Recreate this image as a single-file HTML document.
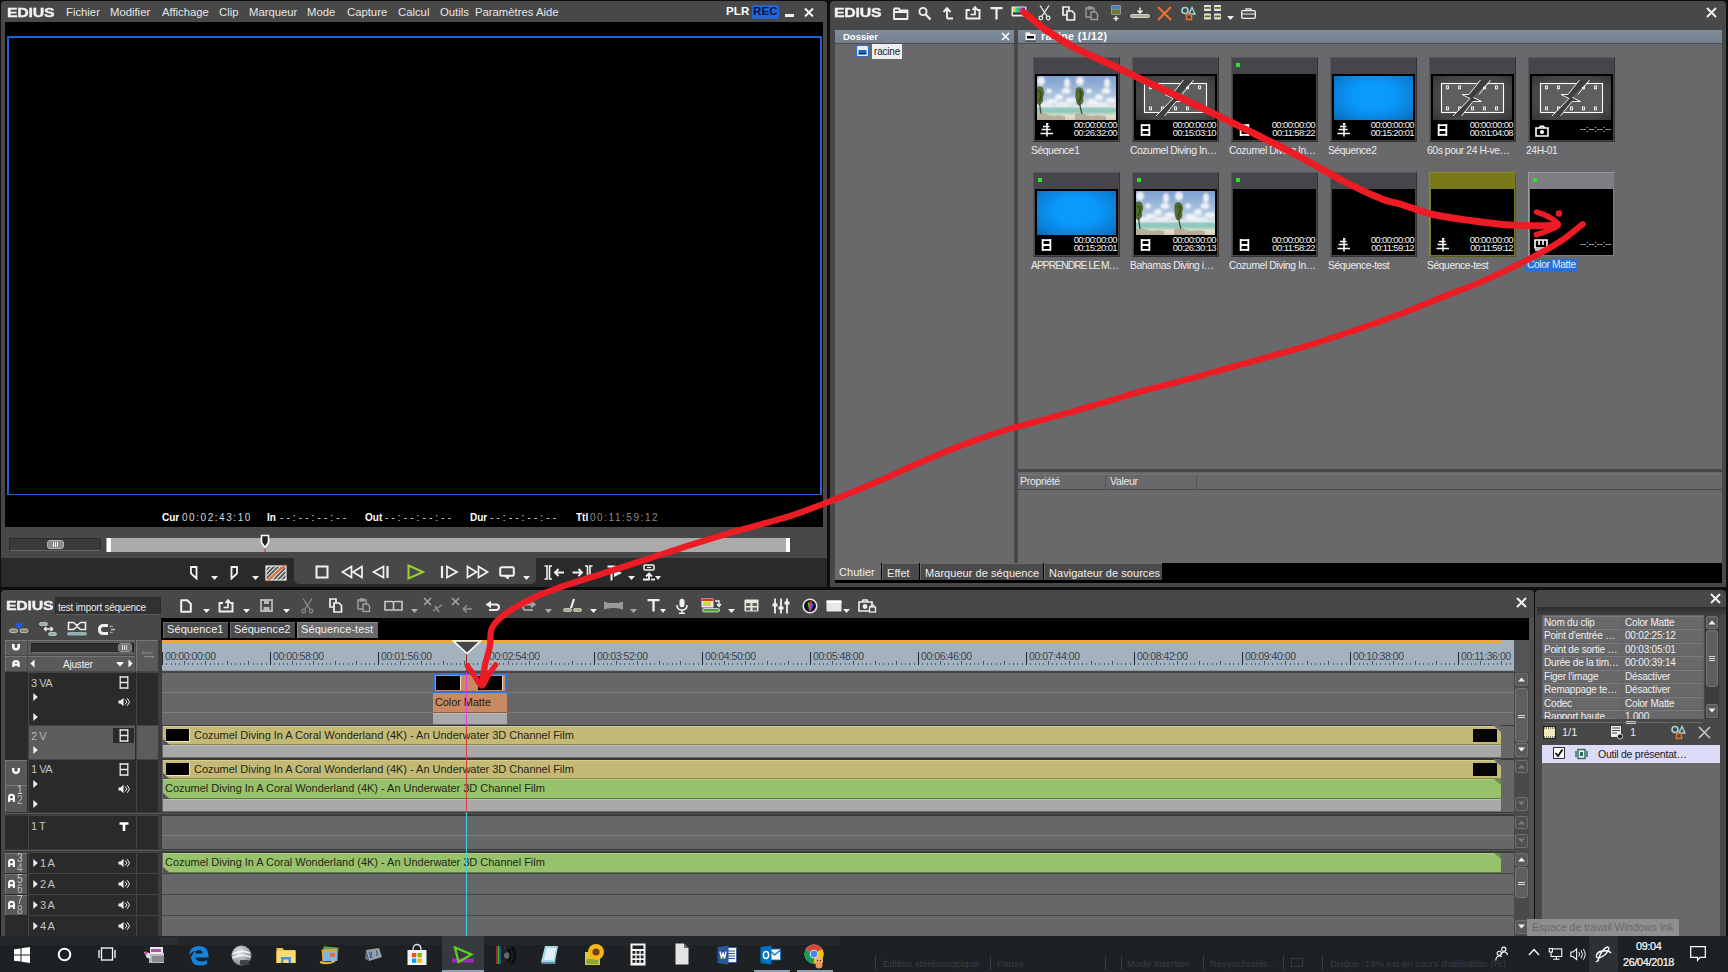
<!DOCTYPE html>
<html lang="fr">
<head>
<meta charset="utf-8">
<title>EDIUS</title>
<style>
*{box-sizing:border-box;margin:0;padding:0}
html,body{width:1728px;height:972px;overflow:hidden;background:#0e0e0e}
body{position:relative;font-family:"Liberation Sans",sans-serif;font-size:11px;color:#e8e8e8;line-height:1}
.a{position:absolute}
.t{position:absolute;white-space:nowrap}
svg{position:absolute;overflow:visible}
.logo{position:absolute;font-weight:bold;font-size:13px;color:#f2f2f2;letter-spacing:-0.2px;-webkit-text-stroke:0.35px #f2f2f2;transform-origin:0 0;transform:scaleX(1.22)}
.win{position:absolute;background:#484848;border-radius:4px 4px 0 0}
/* player */
#pl .menu span{position:absolute;top:5.5px;font-size:11.3px;color:#e6e6e6}
.tc{position:absolute;top:512px;font-size:10px;color:#d8d8d8;letter-spacing:1.55px}
.tcl{position:absolute;top:512px;font-size:10px;font-weight:bold;color:#fff}
/* bin */
.hdr{position:absolute;height:14px;border-bottom:1px solid #4c4c4e;background:linear-gradient(#808d9b,#74808d);font-size:10px;font-weight:bold;color:#fff}
.panel{position:absolute;background:#69696b}
.th{position:absolute;width:84px;height:84px;background:#3f3f41;box-shadow:0 0 0 1px #5a5a5c}
.th .im{position:absolute;left:5px;top:17px;width:78px;height:44px}
.th .bk{position:absolute;left:5px;top:17px;width:78px;height:64px;background:#000}
.th .tm{position:absolute;right:3px;top:62px;font-size:9px;line-height:8px;color:#eee;text-align:right;letter-spacing:-0.2px}
.th .gd{position:absolute;left:5px;top:7px;width:4px;height:4px;background:#2de02d}
.cap{position:absolute;font-size:10.3px;color:#ececec;white-space:nowrap;letter-spacing:-0.4px}
.tab{position:absolute;white-space:nowrap;font-size:11px;color:#eee;padding:4px 0 0 4px;background:#4a4a4c;border-left:1px solid #6c6c6e;border-top:1px solid #6c6c6e;letter-spacing:0.05px}
/* timeline */
.trk{position:absolute;left:162px;width:1352px;background:#69696b}
.clipv{position:absolute;background:#c4ba76;color:#222;font-size:11px}
.clipa{position:absolute;background:#97c26c;color:#222;font-size:11px}
.clipg{position:absolute;background:#a8a8a8}
.hd{position:absolute;background:#2a2a2a}
.rl{position:absolute;top:651px;font-size:10px;color:#3a4048;letter-spacing:-0.2px}
.rt{position:absolute;top:650px;width:1px;height:13px;background:#2a3038}
.inf{position:absolute;font-size:10px;color:#f0f0f0;white-space:nowrap;letter-spacing:-0.2px}
</style>
</head>
<body>

<!-- ================= PLAYER WINDOW ================= -->
<div id="pl" class="win" style="left:1px;top:1px;width:826px;height:586px">
  <div class="logo" style="left:6px;top:5px">EDIUS</div>
  <div class="menu">
    <span style="left:65px">Fichier</span>
    <span style="left:109px">Modifier</span>
    <span style="left:161px">Affichage</span>
    <span style="left:218px">Clip</span>
    <span style="left:248px">Marqueur</span>
    <span style="left:306px">Mode</span>
    <span style="left:346px">Capture</span>
    <span style="left:397px">Calcul</span>
    <span style="left:439px">Outils</span>
    <span style="left:474px">Paramètres</span>
    <span style="left:535px">Aide</span>
  </div>
  <div class="t" style="left:725px;top:5px;font-size:11.5px;font-weight:bold;color:#fff;letter-spacing:0.2px">PLR</div>
  <div class="t" style="left:751px;top:4px;width:27px;height:14px;background:#2565d8;border-radius:2px;font-size:11.5px;font-weight:bold;color:#0a1a44;padding:1px 0 0 1px;letter-spacing:0.1px">REC</div>
  <div class="a" style="left:784px;top:13px;width:9px;height:3px;background:#f0f0f0"></div>
  <svg style="left:803px;top:7px" width="10" height="9"><path d="M1 0.500L9 8.500M9 0.500L1 8.500" stroke="#f0f0f0" stroke-width="2"/></svg>

  <div class="a" style="left:4px;top:21px;width:818px;height:505px;background:#000"></div>
  <div class="a" style="left:6px;top:35px;width:815px;height:459px;border:2px solid #1f62d6;border-width:2px 2px 1px 2px"></div>

  <div class="tcl" style="left:161px">Cur</div><div class="tc" style="left:181px">00:02:43:10</div>
  <div class="tcl" style="left:266px">In</div><div class="tc" style="left:279px;letter-spacing:3.1px">--:--:--:--</div>
  <div class="tcl" style="left:364px">Out</div><div class="tc" style="left:384px;letter-spacing:3.1px">--:--:--:--</div>
  <div class="tcl" style="left:469px">Dur</div><div class="tc" style="left:489px;letter-spacing:3.1px">--:--:--:--</div>
  <div class="tcl" style="left:575px">Ttl</div><div class="tc" style="left:589px;color:#8a8a8a">00:11:59:12</div>

  <!-- slider + scrub -->
  <div class="a" style="left:8px;top:537px;width:92px;height:13px;background:#3a3a3a;border:1px solid #2c2c2c;border-bottom-color:#666"></div>
  <div class="a" style="left:46px;top:539px;width:17px;height:9px;background:#8a8a8a;border-radius:3px;border:1px solid #b4b4b4"></div><div class="a" style="left:52px;top:541px;width:1px;height:5px;background:#eee"></div><div class="a" style="left:54px;top:541px;width:1px;height:5px;background:#eee"></div><div class="a" style="left:56px;top:541px;width:1px;height:5px;background:#eee"></div>
  <div class="a" style="left:105px;top:537px;width:683px;height:14px;background:#ababab"></div>
  <div class="a" style="left:106px;top:537px;width:4px;height:14px;background:#fff"></div>
  <div class="a" style="left:785px;top:537px;width:4px;height:14px;background:#fff"></div>
  <svg style="left:259px;top:533px" width="10" height="18"><path d="M1.5 1.5h7v7l-3.5 5l-3.5-5z" fill="#222" stroke="#fff" stroke-width="1.6"/><path d="M5 14v4" stroke="#e03030" stroke-width="1"/></svg>

  <!-- controls row -->
  <div class="a" style="left:0;top:557px;width:826px;height:29px;background:#2a2a2a"></div>
  <div class="a" style="left:293px;top:557px;width:242px;height:26px;background:#484848;border-radius:0 0 5px 5px"></div>
  <svg style="left:189px;top:565px" width="8" height="14" viewBox="0 0 8 14"><path d="M1 1h5.500v11.500L1 7.500z" stroke="#f2f2f2" fill="none" stroke-width="1.800"/></svg>
  <svg style="left:210px;top:575px" width="7" height="4" viewBox="0 0 7 4"><path d="M0 0h7L3.500 4z" fill="#f0f0f0"/></svg>
  <svg style="left:229px;top:565px" width="8" height="14" viewBox="0 0 8 14"><path d="M7 1H1.500v11.500L7 7.500z" stroke="#f2f2f2" fill="none" stroke-width="1.800"/></svg>
  <svg style="left:251px;top:575px" width="7" height="4" viewBox="0 0 7 4"><path d="M0 0h7L3.500 4z" fill="#f0f0f0"/></svg>
  <svg style="left:264px;top:563px" width="22" height="18" viewBox="0 0 22 18"><defs><pattern id="hat" width="3" height="3" patternUnits="userSpaceOnUse" patternTransform="rotate(-45)"><rect width="3" height="1.400" fill="#f0f0f0"/></pattern></defs><rect x="1" y="2" width="20" height="14" fill="#3a3a3a"/><rect x="1" y="2" width="20" height="14" fill="url(#hat)"/><rect x="1" y="2" width="20" height="14" fill="none" stroke="#f0f0f0" stroke-width="1.200"/><path d="M2 17L20.500 1" stroke="#f07030" stroke-width="1.800"/></svg>
  <svg style="left:314px;top:564px" width="14" height="14" viewBox="0 0 14 14"><rect x="1.500" y="1.500" width="11" height="11" stroke="#f2f2f2" fill="none" stroke-width="2"/></svg>
  <svg style="left:340px;top:564px" width="23" height="14" viewBox="0 0 23 14"><path d="M10.500 1.500L1.500 7l9 5.500zM21 1.500L12 7l9 5.500z" stroke="#f2f2f2" fill="none" stroke-width="1.700" stroke-linejoin="miter"/></svg>
  <svg style="left:371px;top:564px" width="18" height="14" viewBox="0 0 18 14"><path d="M11.500 1.500L1.500 7l10 5.500z" stroke="#f2f2f2" fill="none" stroke-width="1.700"/><path d="M15.500 1v12" stroke="#f2f2f2" fill="none" stroke-width="2.200"/></svg>
  <svg style="left:406px;top:563px" width="18" height="16" viewBox="0 0 18 16"><path d="M1.500 1.500L16 8L1.500 14.500z" fill="none" stroke="#9ad030" stroke-width="2"/></svg>
  <svg style="left:439px;top:564px" width="19" height="14" viewBox="0 0 19 14"><path d="M7 1.500L17 7l-10 5.500z" stroke="#f2f2f2" fill="none" stroke-width="1.700"/><path d="M2 1v12" stroke="#f2f2f2" fill="none" stroke-width="2.200"/></svg>
  <svg style="left:465px;top:564px" width="24" height="14" viewBox="0 0 24 14"><path d="M1.500 1.500L10.500 7l-9 5.500zM12.500 1.500L21.500 7l-9 5.500z" stroke="#f2f2f2" fill="none" stroke-width="1.700"/></svg>
  <svg style="left:498px;top:565px" width="16" height="14" viewBox="0 0 16 14"><rect x="1.200" y="1.200" width="13.600" height="8.600" rx="1.500" stroke="#f2f2f2" fill="none" stroke-width="2"/><path d="M5 9.500L9 13l1-3.500" fill="#f2f2f2" stroke="#f2f2f2" stroke-width="1"/></svg>
  <svg style="left:522px;top:575px" width="7" height="4" viewBox="0 0 7 4"><path d="M0 0h7L3.500 4z" fill="#f0f0f0"/></svg>
  <svg style="left:543px;top:564px" width="21" height="15" viewBox="0 0 21 15"><path d="M0.500 1h2.500v13h-2.500M8 1H5.500v13H8" stroke="#f2f2f2" fill="none" stroke-width="1.600"/><path d="M20 7.500h-9M14.500 4L11 7.500l3.500 3.500" stroke="#f2f2f2" fill="none" stroke-width="1.900"/></svg>
  <svg style="left:571px;top:564px" width="21" height="15" viewBox="0 0 21 15"><path d="M13 1h2.500v13H13M20.500 1H18v13h2.500" stroke="#f2f2f2" fill="none" stroke-width="1.600"/><path d="M0.500 7.500h9M6.500 4L10 7.500L6.500 11" stroke="#f2f2f2" fill="none" stroke-width="1.900"/></svg>
  <svg style="left:606px;top:564px" width="16" height="16" viewBox="0 0 16 16"><path d="M0.500 1.500h8M4.500 1.500v14" stroke="#f2f2f2" fill="none" stroke-width="2"/><path d="M7 4l8 4l-8 4z" fill="#f2f2f2"/></svg>
  <svg style="left:627px;top:575px" width="7" height="4" viewBox="0 0 7 4"><path d="M0 0h7L3.500 4z" fill="#f0f0f0"/></svg>
  <svg style="left:641px;top:563px" width="14" height="17" viewBox="0 0 14 17"><rect x="2" y="1" width="10" height="5" rx="1" stroke="#f2f2f2" fill="none" stroke-width="1.500"/><path d="M5 3.500h4" stroke="#f2f2f2" fill="none" stroke-width="1.200"/><path d="M1 15.500h6V11M4 12.500L7 9.500l3 3" stroke="#f2f2f2" fill="none" stroke-width="1.800"/><path d="M9 15.500h4" stroke="#f2f2f2" fill="none" stroke-width="1.800"/></svg>
  <svg style="left:654px;top:575px" width="6" height="4" viewBox="0 0 6 4"><path d="M0 0h6L3 4z" fill="#f0f0f0"/></svg>
</div>

<!-- ================= BIN WINDOW ================= -->
<svg width="0" height="0" style="left:0;top:0"><defs>
<symbol id="i-seq" viewBox="0 0 14 14"><path d="M6 0.8h2.4M3 3.4h6.5M1.6 6.4h9M0.5 10.6h12.5M7 0v13.5" stroke="#fff" stroke-width="1.5" fill="none"/></symbol>
<symbol id="i-film" viewBox="0 0 12 14"><path d="M1.8 0.5v13M10.2 0.5v13M1.8 1.6h8.4M1.8 7h8.4M1.8 12.4h8.4" stroke="#fff" stroke-width="2" fill="none"/></symbol>
<symbol id="i-cam" viewBox="0 0 14 12"><path d="M1 3h12v8H1zM4.5 3l1-1.8h3l1 1.8" stroke="#fff" stroke-width="1.6" fill="none"/><circle cx="7" cy="7" r="2" fill="#fff"/></symbol>
<symbol id="i-mat" viewBox="0 0 14 12"><path d="M1 1h12v8H1zM5 1v5M9 1v5M1 11h9" stroke="#fff" stroke-width="1.6" fill="none"/></symbol>
<symbol id="beach" viewBox="0 0 79 44">
<defs><linearGradient id="sky" x1="0" y1="0" x2="0" y2="1"><stop offset="0" stop-color="#7c9fcf"/><stop offset="0.45" stop-color="#abc3de"/><stop offset="0.7" stop-color="#dde6ea"/><stop offset="0.73" stop-color="#9accc0"/><stop offset="0.8" stop-color="#8cc6b8"/><stop offset="0.86" stop-color="#b5d6c6"/><stop offset="0.9" stop-color="#e6dfd0"/><stop offset="1" stop-color="#d9ccb8"/></linearGradient>
<filter id="bl" x="-20%" y="-20%" width="140%" height="140%"><feGaussianBlur stdDeviation="0.9"/></filter><filter id="bl2" x="-20%" y="-20%" width="140%" height="140%"><feGaussianBlur stdDeviation="0.5"/></filter>
<clipPath id="bc"><rect width="79" height="44"/></clipPath></defs>
<g clip-path="url(#bc)"><rect width="79" height="44" fill="url(#sky)"/>
<g fill="#f6f7f9" filter="url(#bl)" opacity="0.92"><ellipse cx="4" cy="5" rx="4" ry="4.500"/><ellipse cx="12" cy="15" rx="3" ry="2.500"/><ellipse cx="30" cy="7" rx="3" ry="5"/><ellipse cx="29" cy="15" rx="4.500" ry="3"/><ellipse cx="22" cy="21" rx="4" ry="3"/><ellipse cx="34" cy="24" rx="5" ry="2.500"/><ellipse cx="15" cy="25" rx="5" ry="2"/><ellipse cx="43" cy="5" rx="4" ry="4.500"/><ellipse cx="52" cy="15" rx="3" ry="2.500"/><ellipse cx="70" cy="7" rx="3" ry="5"/><ellipse cx="69" cy="15" rx="4.500" ry="3"/><ellipse cx="62" cy="21" rx="4" ry="3"/><ellipse cx="74" cy="24" rx="5" ry="2.500"/><ellipse cx="55" cy="25" rx="5" ry="2"/><ellipse cx="8" cy="28" rx="7" ry="1.500"/><ellipse cx="60" cy="28" rx="12" ry="1.500"/><ellipse cx="26" cy="28" rx="8" ry="1.500"/></g>
<g filter="url(#bl2)"><path d="M0 11q5-2 6.500 2.500q1.500 4-0.500 7.500q1 5-2.500 7.500q-2.500 1-3.500-1z" fill="#526b30"/><path d="M1 15q3 0 3 4t-2 6" stroke="#2f4a1c" stroke-width="1.500" fill="none"/><path d="M39 12.500q4.500-3 7 1q2 4.500 0 8q1.500 5-2.500 7.500q-3.500 1-4-3q-2-7-0.500-13.500z" fill="#526b30"/><path d="M42 15q3 1 2 5t-2 6" stroke="#2f4a1c" stroke-width="1.500" fill="none"/>
<path d="M2.500 27l1.500 11M42.500 27q1 6 2.500 11" stroke="#4e4030" stroke-width="1.300" fill="none"/>
<path d="M0 38q5-1.500 10 0.500t12 0.500l6 1v4H0zM38 38q6-1.500 11 0.500t12 0.500l8 1v4H38z" fill="#9a8d78" opacity="0.550"/></g>
</g></symbol>
<symbol id="offl" viewBox="0 0 79 44">
<defs><radialGradient id="og" cx="0.5" cy="0.5" r="0.75"><stop offset="0" stop-color="#585858"/><stop offset="0.7" stop-color="#444"/><stop offset="1" stop-color="#303030"/></radialGradient></defs>
<rect width="79" height="44" fill="url(#og)"/>
<rect x="8.500" y="7.500" width="62" height="29" fill="#5e5e5e" stroke="#fff" stroke-width="1.100"/>
<g fill="none" stroke="#fff" stroke-width="0.900"><rect x="13.500" y="10" width="2" height="2.800"/><rect x="25.500" y="10" width="2" height="2.800"/><rect x="50.500" y="10" width="2" height="2.800"/><rect x="62.500" y="10" width="2" height="2.800"/><rect x="13.500" y="31" width="2" height="2.800"/><rect x="25.500" y="31" width="2" height="2.800"/><rect x="38.500" y="31" width="2" height="2.800"/><rect x="50.500" y="31" width="2" height="2.800"/><rect x="62.500" y="31" width="2" height="2.800"/></g>
<path d="M47.500 4L36 18.500h-7L37 22.500L20 40h8.500L40 25.500h7L39.500 21.500L57.500 4z" fill="#3e3e3e"/>
<path d="M47.500 4L36 18.500h-7l8 4L20 40M57.500 4L46 18.500M28.500 40L40 25.500h8.500l-8-4" stroke="#fff" stroke-width="0.900" fill="none"/>
<path d="M57.500 4L43 22.500M47.500 4L33 22.500" stroke="#fff" stroke-width="0" fill="none"/>
</symbol>
</defs></svg>
<div class="win" style="left:830px;top:1px;width:896px;height:586px">
<div class="logo" style="left:4px;top:5px">EDIUS</div>
<svg style="left:63px;top:6px" width="16" height="13" viewBox="0 0 16 13"><path d="M1 3.5V12h13.5V3.5H7L6 1.5H1.5z M1 5h13.5" stroke="#f0f0f0" fill="none" stroke-width="1.8" stroke-linejoin="round"/></svg>
<svg style="left:88px;top:5px" width="14" height="15" viewBox="0 0 14 15"><circle cx="5" cy="5.5" r="3.6" stroke="#f0f0f0" fill="none" stroke-width="1.9"/><path d="M7.8 8.5L12.5 13.5" stroke="#f0f0f0" fill="none" stroke-width="2.2"/></svg>
<svg style="left:112px;top:5px" width="12" height="14" viewBox="0 0 12 14"><path d="M5 12.5h6M5 12.5V3M1.5 6L5 2.2L8.5 6" stroke="#f0f0f0" fill="none" stroke-width="1.9"/></svg>
<svg style="left:135px;top:4px" width="16" height="15" viewBox="0 0 16 15"><path d="M5 5H1.5v8.5h13V5H12" stroke="#f0f0f0" fill="none" stroke-width="1.9"/><path d="M5.5 9.5h4.5V3M7.5 5L10 2L12.5 5" stroke="#f0f0f0" fill="none" stroke-width="1.7"/></svg>
<svg style="left:160px;top:6px" width="13" height="13" viewBox="0 0 13 13"><path d="M0.5 1.2h12M6.5 1.2V12.5" stroke="#f0f0f0" fill="none" stroke-width="2.2"/></svg>
<svg style="left:181px;top:5px" width="16" height="12" viewBox="0 0 16 12"><rect x="0.5" y="0.5" width="15" height="10" rx="1" fill="#e8e8e8"/><rect x="2" y="1.5" width="2.4" height="5" fill="#d8d820"/><rect x="4.4" y="1.5" width="2.4" height="5" fill="#20c8c8"/><rect x="6.8" y="1.5" width="2.4" height="5" fill="#20c820"/><rect x="9.2" y="1.5" width="2.4" height="5" fill="#c820c8"/><rect x="11.6" y="1.5" width="2.4" height="5" fill="#2020c8"/><rect x="2" y="6.5" width="12" height="2" fill="#223"/></svg>
<svg style="left:208px;top:4px" width="13" height="16" viewBox="0 0 13 16"><path d="M2 0.5L9 11M11 0.5L4 11" stroke="#f0f0f0" fill="none" stroke-width="1.3"/><circle cx="2.8" cy="13" r="1.8" stroke="#f0f0f0" fill="none" stroke-width="1.2"/><circle cx="10.2" cy="13" r="1.8" stroke="#f0f0f0" fill="none" stroke-width="1.2"/></svg>
<svg style="left:232px;top:5px" width="14" height="15" viewBox="0 0 14 15"><path d="M1 1h6v8H1z" stroke="#f0f0f0" fill="none" stroke-width="1.7"/><path d="M5 5h5l2.5 2.5V14H5z" fill="#484848" stroke="#f0f0f0" stroke-width="1.7"/></svg>
<svg style="left:255px;top:5px" width="14" height="15" viewBox="0 0 14 15"><path d="M1 2h8v9H1zM3.5 1h3v2h-3z" fill="none" stroke="#9a9a9a" stroke-width="1.4"/><path d="M6 6h4.5l2 2V13.5H6z" fill="#484848" stroke="#9a9a9a" stroke-width="1.4"/></svg>
<svg style="left:281px;top:4px" width="10" height="16" viewBox="0 0 10 16"><rect x="0.5" y="0.5" width="9" height="9" fill="#ddd"/><rect x="1" y="1" width="8" height="3.5" fill="#4a7fd0"/><rect x="1" y="4.5" width="8" height="4.5" fill="#6a7a2a"/><path d="M5 16V11M2.5 13.5h5" stroke="#f0f0f0" stroke-width="1.4"/></svg>
<svg style="left:300px;top:6px" width="20" height="12" viewBox="0 0 20 12"><path d="M10 0.5V5M7.5 3.5L10 6l2.5-2.5" stroke="#f0f0f0" stroke-width="1.4" fill="none"/><rect x="0.5" y="7.5" width="19" height="3" rx="1.5" fill="#9fb48a" stroke="#e8e8e8" stroke-width="0.8"/></svg>
<svg style="left:327px;top:5px" width="15" height="15" viewBox="0 0 15 15"><path d="M1 1L14 14M14 1L1 14" stroke="#f07030" stroke-width="2"/></svg>
<svg style="left:351px;top:5px" width="15" height="15" viewBox="0 0 15 15"><circle cx="4" cy="4.5" r="3" fill="none" stroke="#9fd6d6" stroke-width="1.6"/><path d="M11 1.5L14 8H8z" fill="none" stroke="#9fd6d6" stroke-width="1.4"/><rect x="5.5" y="8.5" width="5" height="5" fill="none" stroke="#f07030" stroke-width="1.5"/></svg>
<svg style="left:374px;top:4px" width="18" height="15" viewBox="0 0 18 15"><g fill="#e4e4e4"><rect x="0" y="0" width="7" height="6" rx="1"/><rect x="10" y="0" width="7" height="6" rx="1"/><rect x="0" y="8.5" width="7" height="6" rx="1"/><rect x="10" y="8.5" width="7" height="6" rx="1"/></g><g fill="#6a6a20"><rect x="0.5" y="2" width="6" height="1.8"/><rect x="10.5" y="2" width="6" height="1.8"/><rect x="0.5" y="10.5" width="6" height="1.8"/><rect x="10.5" y="10.5" width="6" height="1.8"/></g></svg>
<svg style="left:397px;top:15px" width="7" height="4" viewBox="0 0 7 4"><path d="M0 0h7L3.5 4z" fill="#f0f0f0"/></svg>
<svg style="left:411px;top:7px" width="15" height="11" viewBox="0 0 15 11"><rect x="0.7" y="2.7" width="13.6" height="7.6" rx="1" stroke="#f0f0f0" fill="none" stroke-width="1.3"/><path d="M5 2.5V0.8h5V2.5M0.7 6h13.6" stroke="#f0f0f0" fill="none" stroke-width="1.2"/></svg>
<svg style="left:876px;top:6px" width="11" height="11" viewBox="0 0 11 11"><path d="M1 1L10 10M10 1L1 10" stroke="#f0f0f0" stroke-width="2"/></svg>
<div class="panel" style="left:5px;top:29px;width:179px;height:533px"></div>
<div class="hdr" style="left:5px;top:29px;width:179px"><span class="t" style="left:8px;top:2px;font-size:9.5px">Dossier</span></div>
<svg style="left:171px;top:31px" width="9" height="9" viewBox="0 0 9 9"><path d="M1 1L8 8M8 1L1 8" stroke="#fff" stroke-width="1.6"/></svg>
<svg style="left:26px;top:44px" width="13" height="12" viewBox="0 0 13 12"><rect x="0.5" y="0.5" width="12" height="11" rx="1.5" fill="#e8eef6" stroke="#2a6ad0" stroke-width="1"/><rect x="2.5" y="5" width="8" height="3.5" fill="#1565c8"/><rect x="2.5" y="8" width="8" height="1.5" fill="#0a2a60"/></svg>
<div class="t" style="left:42px;top:43px;width:30px;height:15px;background:#efefef;color:#222;font-size:10px;padding:3px 0 0 2px;letter-spacing:-0.2px">racine</div>
<div class="panel" style="left:188px;top:29px;width:704px;height:439px"></div>
<div class="hdr" style="left:188px;top:29px;width:704px"><span class="t" style="left:23px;top:1px;font-size:10.5px;letter-spacing:0.4px">racine (1/12)</span></div>
<svg style="left:195px;top:31px" width="11" height="10" viewBox="0 0 11 10"><path d="M0.500 1V8.500h10V2H5.500L4.800 0.500H0.500z" fill="#fff"/><rect x="2" y="4" width="7" height="2.500" fill="#000"/><rect x="0.500" y="8.500" width="10.500" height="1" fill="#222"/></svg>
<div class="a" style="left:203px;top:56px;width:87px;height:85px;background:#46464a;border:1px solid #57575b;border-right-color:#333336;border-bottom-color:#333336">
<div class="a" style="left:1px;top:16px;width:83px;height:66px;background:#000"></div>
<svg style="left:3px;top:18px" width="79" height="44"><use href="#beach"/></svg>
<svg style="left:6px;top:65px" width="14" height="14"><use href="#i-seq"/></svg>
<div class="t" style="right:2px;top:63px;font-size:9.5px;line-height:7.5px;color:#f4f4f4;text-align:right;letter-spacing:-0.62px">00:00:00:00<br>00:26:32:00</div>
</div>
<div class="cap" style="left:201px;top:145px">Séquence1</div>
<div class="a" style="left:302px;top:56px;width:87px;height:85px;background:#46464a;border:1px solid #57575b;border-right-color:#333336;border-bottom-color:#333336">
<div class="a" style="left:1px;top:16px;width:83px;height:66px;background:#000"></div>
<svg style="left:3px;top:18px" width="79" height="44"><use href="#offl"/></svg>
<svg style="left:6.5px;top:65px" width="11" height="14"><use href="#i-film"/></svg>
<div class="t" style="right:2px;top:63px;font-size:9.5px;line-height:7.5px;color:#f4f4f4;text-align:right;letter-spacing:-0.62px">00:00:00:00<br>00:15:03:10</div>
</div>
<div class="cap" style="left:300px;top:145px">Cozumel Diving In…</div>
<div class="a" style="left:401px;top:56px;width:87px;height:85px;background:#46464a;border:1px solid #57575b;border-right-color:#333336;border-bottom-color:#333336">
<div class="a" style="left:1px;top:16px;width:83px;height:66px;background:#000"></div>
<div class="a" style="left:4px;top:5px;width:4px;height:4px;background:#30e030"></div>
<svg style="left:6.5px;top:65px" width="11" height="14"><use href="#i-film"/></svg>
<div class="t" style="right:2px;top:63px;font-size:9.5px;line-height:7.5px;color:#f4f4f4;text-align:right;letter-spacing:-0.62px">00:00:00:00<br>00:11:58:22</div>
</div>
<div class="cap" style="left:399px;top:145px">Cozumel Diving In…</div>
<div class="a" style="left:500px;top:56px;width:87px;height:85px;background:#46464a;border:1px solid #57575b;border-right-color:#333336;border-bottom-color:#333336">
<div class="a" style="left:1px;top:16px;width:83px;height:66px;background:#000"></div>
<div class="a" style="left:3px;top:18px;width:79px;height:44px;background:radial-gradient(ellipse at 50% 45%,#0a9eff 0%,#0a98fb 40%,#0a7cd2 80%,#0a66b2 100%)"></div>
<svg style="left:6px;top:65px" width="14" height="14"><use href="#i-seq"/></svg>
<div class="t" style="right:2px;top:63px;font-size:9.5px;line-height:7.5px;color:#f4f4f4;text-align:right;letter-spacing:-0.62px">00:00:00:00<br>00:15:20:01</div>
</div>
<div class="cap" style="left:498px;top:145px">Séquence2</div>
<div class="a" style="left:599px;top:56px;width:87px;height:85px;background:#46464a;border:1px solid #57575b;border-right-color:#333336;border-bottom-color:#333336">
<div class="a" style="left:1px;top:16px;width:83px;height:66px;background:#000"></div>
<svg style="left:3px;top:18px" width="79" height="44"><use href="#offl"/></svg>
<svg style="left:6.5px;top:65px" width="11" height="14"><use href="#i-film"/></svg>
<div class="t" style="right:2px;top:63px;font-size:9.5px;line-height:7.5px;color:#f4f4f4;text-align:right;letter-spacing:-0.62px">00:00:00:00<br>00:01:04:08</div>
</div>
<div class="cap" style="left:597px;top:145px">60s pour 24 H-ve…</div>
<div class="a" style="left:698px;top:56px;width:87px;height:85px;background:#46464a;border:1px solid #57575b;border-right-color:#333336;border-bottom-color:#333336">
<div class="a" style="left:1px;top:16px;width:83px;height:66px;background:#000"></div>
<svg style="left:3px;top:18px" width="79" height="44"><use href="#offl"/></svg>
<svg style="left:6px;top:67px" width="14" height="12"><use href="#i-cam"/></svg>
<div class="t" style="right:3px;top:67px;font-size:9px;color:#e4e4e4;letter-spacing:-0.05px">--:--:--:--</div>
</div>
<div class="cap" style="left:696px;top:145px">24H-01</div>
<div class="a" style="left:203px;top:171px;width:87px;height:85px;background:#46464a;border:1px solid #57575b;border-right-color:#333336;border-bottom-color:#333336">
<div class="a" style="left:1px;top:16px;width:83px;height:66px;background:#000"></div>
<div class="a" style="left:3px;top:18px;width:79px;height:44px;background:radial-gradient(ellipse at 50% 45%,#0a9eff 0%,#0a98fb 40%,#0a7cd2 80%,#0a66b2 100%)"></div>
<div class="a" style="left:4px;top:5px;width:4px;height:4px;background:#30e030"></div>
<svg style="left:6.5px;top:65px" width="11" height="14"><use href="#i-film"/></svg>
<div class="t" style="right:2px;top:63px;font-size:9.5px;line-height:7.5px;color:#f4f4f4;text-align:right;letter-spacing:-0.62px">00:00:00:00<br>00:15:20:01</div>
</div>
<div class="cap" style="left:201px;top:260px;letter-spacing:-0.95px">APPRENDRE LE M…</div>
<div class="a" style="left:302px;top:171px;width:87px;height:85px;background:#46464a;border:1px solid #57575b;border-right-color:#333336;border-bottom-color:#333336">
<div class="a" style="left:1px;top:16px;width:83px;height:66px;background:#000"></div>
<svg style="left:3px;top:18px" width="79" height="44"><use href="#beach"/></svg>
<div class="a" style="left:4px;top:5px;width:4px;height:4px;background:#30e030"></div>
<svg style="left:6.5px;top:65px" width="11" height="14"><use href="#i-film"/></svg>
<div class="t" style="right:2px;top:63px;font-size:9.5px;line-height:7.5px;color:#f4f4f4;text-align:right;letter-spacing:-0.62px">00:00:00:00<br>00:26:30:13</div>
</div>
<div class="cap" style="left:300px;top:260px">Bahamas Diving i…</div>
<div class="a" style="left:401px;top:171px;width:87px;height:85px;background:#46464a;border:1px solid #57575b;border-right-color:#333336;border-bottom-color:#333336">
<div class="a" style="left:1px;top:16px;width:83px;height:66px;background:#000"></div>
<div class="a" style="left:4px;top:5px;width:4px;height:4px;background:#30e030"></div>
<svg style="left:6.5px;top:65px" width="11" height="14"><use href="#i-film"/></svg>
<div class="t" style="right:2px;top:63px;font-size:9.5px;line-height:7.5px;color:#f4f4f4;text-align:right;letter-spacing:-0.62px">00:00:00:00<br>00:11:58:22</div>
</div>
<div class="cap" style="left:399px;top:260px">Cozumel Diving In…</div>
<div class="a" style="left:500px;top:171px;width:87px;height:85px;background:#46464a;border:1px solid #57575b;border-right-color:#333336;border-bottom-color:#333336">
<div class="a" style="left:1px;top:16px;width:83px;height:66px;background:#000"></div>
<svg style="left:6px;top:65px" width="14" height="14"><use href="#i-seq"/></svg>
<div class="t" style="right:2px;top:63px;font-size:9.5px;line-height:7.5px;color:#f4f4f4;text-align:right;letter-spacing:-0.62px">00:00:00:00<br>00:11:59:12</div>
</div>
<div class="cap" style="left:498px;top:260px">Séquence-test</div>
<div class="a" style="left:599px;top:171px;width:87px;height:85px;background:#79791c;border:1px solid #8c8c2a;border-right-color:#5a5a10;border-bottom-color:#5a5a10">
<div class="a" style="left:1px;top:16px;width:83px;height:66px;background:#000"></div>
<svg style="left:6px;top:65px" width="14" height="14"><use href="#i-seq"/></svg>
<div class="t" style="right:2px;top:63px;font-size:9.5px;line-height:7.5px;color:#f4f4f4;text-align:right;letter-spacing:-0.62px">00:00:00:00<br>00:11:59:12</div>
</div>
<div class="cap" style="left:597px;top:260px">Séquence-test</div>
<div class="a" style="left:698px;top:171px;width:87px;height:85px;background:#7e7e82;border:1px solid #9a9a9e;border-right-color:#6a6a6e;border-bottom-color:#6a6a6e">
<div class="a" style="left:1px;top:16px;width:83px;height:66px;background:#000"></div>
<div class="a" style="left:4px;top:5px;width:4px;height:4px;background:#30e030"></div>
<svg style="left:4.5px;top:66px" width="14" height="12"><use href="#i-mat"/></svg>
<div class="t" style="right:3px;top:67px;font-size:9px;color:#e4e4e4;letter-spacing:-0.05px">--:--:--:--</div>
</div>
<div class="cap" style="left:696px;top:258px;background:#2a6fd8;color:#dfeaff;padding:1px 1px 1.5px 1px">Color Matte</div>
<div class="panel" style="left:188px;top:471px;width:704px;height:91px"></div>
<div class="a" style="left:188px;top:473px;width:704px;height:16px;border-bottom:1px solid #4a4a4c;border-top:1px solid #77777a"></div>
<div class="t" style="left:190px;top:475px;font-size:10.5px;letter-spacing:-0.3px">Propriété</div>
<div class="t" style="left:280px;top:475px;font-size:10.5px;letter-spacing:-0.3px">Valeur</div>
<div class="a" style="left:275px;top:474px;width:1px;height:14px;background:#555"></div>
<div class="a" style="left:366px;top:474px;width:1px;height:14px;background:#555"></div>
<div class="a" style="left:5px;top:562px;width:887px;height:20px;background:#000"></div>
<div class="tab" style="left:5px;top:562px;width:46px;height:17px;background:#69696b;border:none;padding:4px 0 0 4px">Chutier</div>
<div class="tab" style="left:52px;top:562px;width:37px;height:17px">Effet</div>
<div class="tab" style="left:90px;top:562px;width:123px;height:17px">Marqueur de séquence</div>
<div class="tab" style="left:214px;top:562px;width:118px;height:17px">Navigateur de sources</div>
</div>
<!-- ================= TIMELINE WINDOW ================= -->
<div class="win" style="left:1px;top:590px;width:1533px;height:346px">
<div class="logo" style="left:5px;top:9px">EDIUS</div>
<div class="a" style="left:54px;top:7px;width:106px;height:18px;background:#323232;border:1px solid #2a2a2a;border-bottom-color:#5a5a5a"></div>
<div class="t" style="left:57px;top:13px;font-size:10px;color:#e8e8e8;letter-spacing:-0.25px">test import séquence</div>
<svg style="left:179px;top:9px" width="12" height="14" viewBox="0 0 12 14"><path d="M1.2 1.2h6l3.6 3.6v8H1.2z" stroke="#f0f0f0" fill="none" stroke-width="2" stroke-linejoin="round"/></svg>
<svg style="left:202px;top:19px" width="7" height="4" viewBox="0 0 7 4"><path d="M0 0h7L3.5 4z" fill="#f0f0f0"/></svg>
<svg style="left:217px;top:8px" width="16" height="15" viewBox="0 0 16 15"><path d="M5 5H1.5v8.5h13V5H12" stroke="#f0f0f0" fill="none" stroke-width="1.9"/><path d="M5.5 9.5h4.5V3M7.5 5L10 2L12.5 5" stroke="#f0f0f0" fill="none" stroke-width="1.7"/></svg>
<svg style="left:242px;top:19px" width="7" height="4" viewBox="0 0 7 4"><path d="M0 0h7L3.5 4z" fill="#f0f0f0"/></svg>
<svg style="left:259px;top:9px" width="13" height="13" viewBox="0 0 13 13"><path d="M1 1h11v11H1z" fill="none" stroke="#b8b8b8" stroke-width="1.8"/><rect x="4" y="1" width="5" height="4" fill="#b8b8b8"/><rect x="3.5" y="8" width="6" height="4" fill="#b8b8b8"/></svg>
<svg style="left:282px;top:19px" width="7" height="4" viewBox="0 0 7 4"><path d="M0 0h7L3.5 4z" fill="#f0f0f0"/></svg>
<svg style="left:300px;top:8px" width="13" height="16" viewBox="0 0 13 16"><path d="M2 0.5L9 11M11 0.5L4 11" stroke="#8c8c8c" fill="none" stroke-width="1.3"/><circle cx="2.8" cy="13" r="1.8" stroke="#8c8c8c" fill="none" stroke-width="1.2"/><circle cx="10.2" cy="13" r="1.8" stroke="#8c8c8c" fill="none" stroke-width="1.2"/></svg>
<svg style="left:328px;top:8px" width="14" height="15" viewBox="0 0 14 15"><path d="M1 1h6v8H1z" stroke="#f0f0f0" fill="none" stroke-width="1.7"/><path d="M5 5h5l2.5 2.5V14H5z" fill="#484848" stroke="#f0f0f0" stroke-width="1.7"/></svg>
<svg style="left:356px;top:8px" width="14" height="15" viewBox="0 0 14 15"><path d="M1 2h8v9H1zM3.5 1h3v2h-3z" fill="none" stroke="#a0a0a0" stroke-width="1.4"/><path d="M6 6h4.5l2 2V13.5H6z" fill="#484848" stroke="#a0a0a0" stroke-width="1.4"/></svg>
<svg style="left:383px;top:10px" width="19" height="11" viewBox="0 0 19 11"><path d="M1 1.5h7q1.5 0 1.5 1.5v7H1zM18 1.5h-7q-1.5 0-1.5 1.5v7H18z" fill="none" stroke="#c8c8c8" stroke-width="1.6"/></svg>
<svg style="left:410px;top:19px" width="7" height="4" viewBox="0 0 7 4"><path d="M0 0h7L3.5 4z" fill="#b0b0b0"/></svg>
<svg style="left:422px;top:7px" width="21" height="17" viewBox="0 0 21 17"><path d="M1 1l7 7M8 1L1 8" stroke="#a8a8a8" stroke-width="1.5"/><path d="M10 14l9-6M12 9l4 6" stroke="#909090" stroke-width="1.5"/></svg>
<svg style="left:450px;top:7px" width="22" height="17" viewBox="0 0 22 17"><path d="M1 1l7 7M8 1L1 8" stroke="#a8a8a8" stroke-width="1.5"/><path d="M12 12h9M12 12l4-3.5M12 12l4 3.5" stroke="#909090" stroke-width="1.6" fill="none"/></svg>
<svg style="left:484px;top:10px" width="15" height="11" viewBox="0 0 15 11"><path d="M5 4.5h6q3 0 3 2.7t-3 2.7H4" stroke="#f0f0f0" fill="none" stroke-width="2"/><path d="M0.5 4.5L6 0.8v7.4z" fill="#f0f0f0"/></svg>
<svg style="left:521px;top:10px" width="15" height="11" viewBox="0 0 15 11"><path d="M10 4.5H4q-3 0-3 2.7t3 2.7h7" stroke="#a0a0a0" fill="none" stroke-width="2"/><path d="M14.5 4.5L9 0.8v7.4z" fill="#a0a0a0"/></svg>
<svg style="left:544px;top:19px" width="7" height="4" viewBox="0 0 7 4"><path d="M0 0h7L3.5 4z" fill="#b0b0b0"/></svg>
<svg style="left:562px;top:8px" width="19" height="15" viewBox="0 0 19 15"><path d="M11 1L8 10" stroke="#f0f0f0" stroke-width="2.2"/><rect x="0.5" y="10.5" width="8" height="3" rx="1.5" fill="#9fb48a" stroke="#e0e0e0" stroke-width="0.7"/><rect x="10.5" y="10.5" width="8" height="3" rx="1.5" fill="#9fb48a" stroke="#e0e0e0" stroke-width="0.7"/></svg>
<svg style="left:589px;top:19px" width="7" height="4" viewBox="0 0 7 4"><path d="M0 0h7L3.5 4z" fill="#f0f0f0"/></svg>
<svg style="left:603px;top:11px" width="19" height="9" viewBox="0 0 19 9"><path d="M0 0.5q4 1.5 7 1.5h5q3 0 7-1.5v8q-4-1.5-7-1.5H7q-3 0-7 1.5z" fill="#9a9a9a"/></svg>
<svg style="left:629px;top:19px" width="7" height="4" viewBox="0 0 7 4"><path d="M0 0h7L3.5 4z" fill="#a8a8a8"/></svg>
<svg style="left:646px;top:9px" width="13" height="13" viewBox="0 0 13 13"><path d="M0.5 1.2h12M6.5 1.2V12.5" stroke="#f0f0f0" fill="none" stroke-width="2.3"/></svg>
<svg style="left:659px;top:19px" width="6" height="4" viewBox="0 0 6 4"><path d="M0 0h6L3 4z" fill="#f0f0f0"/></svg>
<svg style="left:675px;top:8px" width="12" height="16" viewBox="0 0 12 16"><rect x="3.5" y="0.8" width="5" height="8.5" rx="2.5" fill="#f0f0f0"/><path d="M1 7q0 5 5 5t5-5M6 12v3.2M3 15.2h6" stroke="#f0f0f0" fill="none" stroke-width="1.5"/></svg>
<svg style="left:700px;top:8px" width="22" height="16" viewBox="0 0 22 16"><rect x="0.5" y="0.5" width="12" height="9" fill="#e8e8e8"/><rect x="1" y="1" width="11" height="2" fill="#e03020"/><rect x="2" y="4" width="8" height="4" fill="#d8d040"/><rect x="1.5" y="10.5" width="17" height="3.4" rx="1.5" fill="#50a030" stroke="#e8e8e8" stroke-width="0.8"/><path d="M14 3h4v5M16 6l2 2.5L20 6" stroke="#f0f0f0" stroke-width="1.4" fill="none"/></svg>
<svg style="left:727px;top:19px" width="7" height="4" viewBox="0 0 7 4"><path d="M0 0h7L3.5 4z" fill="#f0f0f0"/></svg>
<svg style="left:743px;top:9px" width="15" height="13" viewBox="0 0 15 13"><rect x="0.5" y="0.5" width="14" height="12" rx="1" fill="#e8e8e8"/><g fill="#5a6a50"><rect x="2" y="4" width="4.5" height="3"/><rect x="8.5" y="4" width="4.5" height="3"/><rect x="2" y="8.5" width="4.5" height="3"/><rect x="8.5" y="8.5" width="4.5" height="3"/></g></svg>
<svg style="left:771px;top:8px" width="18" height="16" viewBox="0 0 18 16"><path d="M3 0.5v15M9 0.5v15M15 0.5v15" stroke="#f0f0f0" fill="none" stroke-width="1.8"/><path d="M0.5 7h5M6.5 10h5M12.5 5h5" stroke="#f0f0f0" fill="none" stroke-width="3"/></svg>
<svg style="left:801px;top:8px" width="16" height="16" viewBox="0 0 16 16"><circle cx="8" cy="8" r="6.8" fill="#101010" stroke="#e8e8e8" stroke-width="1.6"/><path d="M8 12.500l-1.500-8" stroke="#30e030" stroke-width="1.800"/><path d="M8 12.500l0.500-9.500" stroke="#e83030" stroke-width="1.600"/><path d="M8 12.500l3-6.500" stroke="#4050f0" stroke-width="1.800"/><path d="M8 12.500l1.500-8" stroke="#e030d0" stroke-width="1.300"/></svg>
<svg style="left:825px;top:10px" width="16" height="12" viewBox="0 0 16 12"><rect x="0.5" y="0.5" width="15" height="11" rx="1" fill="#e8e8e8"/><rect x="0.5" y="0.5" width="15" height="2.5" fill="#fff"/></svg>
<svg style="left:842px;top:19px" width="7" height="4" viewBox="0 0 7 4"><path d="M0 0h7L3.5 4z" fill="#f0f0f0"/></svg>
<svg style="left:857px;top:9px" width="19" height="14" viewBox="0 0 19 14"><path d="M1 3h13v9H1zM4 3l1-2h4l1 2" stroke="#f0f0f0" fill="none" stroke-width="1.6"/><circle cx="7" cy="7.5" r="2.4" fill="#f0f0f0"/><rect x="11.5" y="8" width="6" height="5" fill="#484848" stroke="#f0f0f0" stroke-width="1.3"/><path d="M13 8V6.5q1.5-1.5 3 0V8" stroke="#f0f0f0" fill="none" stroke-width="1.1"/></svg>
<svg style="left:1515px;top:7px" width="11" height="11" viewBox="0 0 11 11"><path d="M1 1L10 10M10 1L1 10" stroke="#f0f0f0" stroke-width="2"/></svg>
<svg style="left:8px;top:33px" width="20" height="11" viewBox="0 0 20 11"><path d="M6 0.500h8l-4 6.500z" fill="#1a60f0"/><rect x="0.500" y="6" width="8" height="3.600" rx="1.800" fill="#8a8a50" stroke="#d8d8d8" stroke-width="0.800"/><rect x="11" y="6" width="8" height="3.600" rx="1.800" fill="#8a8a50" stroke="#d8d8d8" stroke-width="0.800"/></svg>
<svg style="left:38px;top:32px" width="19" height="14" viewBox="0 0 19 14"><rect x="0.5" y="0.5" width="8" height="3" rx="1.5" fill="#8fb0b0" stroke="#d8d8d8" stroke-width="0.7"/><rect x="9.5" y="10.5" width="8" height="3" rx="1.5" fill="#8fb0b0" stroke="#d8d8d8" stroke-width="0.7"/><path d="M5 7h9M5 7l2.5-2M5 7l2.5 2M14 7l-2.5-2M14 7l-2.5 2" stroke="#f0f0f0" stroke-width="1.3" fill="none"/></svg>
<svg style="left:66px;top:30px" width="20" height="16" viewBox="0 0 20 16"><path d="M1.5 2.5h5l3.5 3l3.5-3h5v7h-5L10 6.5L6.5 9.500h-5z" fill="none" stroke="#f0f0f0" stroke-width="1.6"/><rect x="0.5" y="12.500" width="19" height="2.6" rx="1.3" fill="#7fb0b8" stroke="#d0d0d0" stroke-width="0.6"/></svg>
<svg style="left:97px;top:34px" width="18" height="11" viewBox="0 0 18 11"><path d="M10 1.500H5.500q-4 0-4 4t4 4H10" fill="none" stroke="#f0f0f0" stroke-width="3"/><path d="M12 2.500h3M12 8.500h3" stroke="#c8c8c8" stroke-width="1.6" stroke-dasharray="1.5 1"/><path d="M13 5.500h4" stroke="#c8c8c8" stroke-width="1.4"/></svg>
<div class="a" style="left:160px;top:28px;width:1369px;height:22px;background:#000"></div>
<div class="a" style="left:1528px;top:28px;width:5px;height:318px;background:#505050"></div>
<div class="a" style="left:162px;top:32px;width:65px;height:16px;background:#4a4a4c;border-top:1px solid #6a6a6c;border-left:1px solid #6a6a6c"></div>
<div class="a" style="left:229px;top:32px;width:65px;height:16px;background:#4a4a4c;border-top:1px solid #6a6a6c;border-left:1px solid #6a6a6c"></div>
<div class="a" style="left:296px;top:32px;width:81px;height:16px;background:#6b6b6d;border-top:1px solid #8a8a8c;border-left:1px solid #8a8a8c"></div>
<div class="t" style="left:166px;top:34px;font-size:11px;color:#f0f0f0;letter-spacing:0.1px">Séquence1</div>
<div class="t" style="left:233px;top:34px;font-size:11px;color:#f0f0f0;letter-spacing:0.1px">Séquence2</div>
<div class="t" style="left:300px;top:34px;font-size:11px;color:#f0f0f0;letter-spacing:0.1px">Séquence-test</div>
<div class="a" style="left:4px;top:50px;width:22px;height:15px;background:#5a5a5a;border-top:1px solid #777;border-left:1px solid #777"></div>
<div class="a" style="left:4px;top:66px;width:22px;height:15px;background:#5a5a5a;border-top:1px solid #777;border-left:1px solid #777"></div>
<div class="a" style="left:27px;top:50px;width:107px;height:15px;background:#5a5a5a;border-top:1px solid #777"></div>
<div class="a" style="left:27px;top:66px;width:107px;height:15px;background:#5a5a5a;border-top:1px solid #777"></div>
<div class="a" style="left:135px;top:50px;width:22px;height:31px;background:#5a5a5a;border-top:1px solid #777;border-left:1px solid #777"></div>
<div class="a" style="left:30px;top:53px;width:103px;height:10px;background:#2e2e2e;border:1px solid #222;border-bottom-color:#6a6a6a"></div>
<div class="a" style="left:117px;top:53px;width:14px;height:9px;background:#747474;border:1px solid #8c8c8c;border-radius:3px"></div>
<div class="a" style="left:121px;top:55px;width:1px;height:5px;background:#ddd"></div>
<div class="a" style="left:123px;top:55px;width:1px;height:5px;background:#ddd"></div>
<div class="a" style="left:125px;top:55px;width:1px;height:5px;background:#ddd"></div>
<svg style="left:11px;top:54px" width="8" height="7" viewBox="0 0 8 7"><path d="M1.300 0v2.500q0 2.800 2.700 2.800t2.700-2.800V0" stroke="#fff" stroke-width="2.400" fill="none"/></svg>
<svg style="left:11px;top:70px" width="8" height="7" viewBox="0 0 8 7"><path d="M1.300 7V3.500q0-2.400 2.700-2.400t2.700 2.400V7M1.300 4.600h5.400" stroke="#fff" stroke-width="2.200" fill="none"/></svg>
<svg style="left:29px;top:69px" width="5" height="9" viewBox="0 0 5 9"><path d="M4.500 0.5v8l-4-4z" fill="#fff"/></svg>
<svg style="left:127px;top:69px" width="5" height="9" viewBox="0 0 5 9"><path d="M0.5 0.5v8l4-4z" fill="#fff"/></svg>
<svg style="left:115px;top:72px" width="8" height="5" viewBox="0 0 8 5"><path d="M0 0h8L4 4.500z" fill="#fff"/></svg>
<div class="t" style="left:62px;top:70px;font-size:10px;color:#f0f0f0;letter-spacing:-0.2px">Ajuster</div>
<svg style="left:140px;top:61px" width="14" height="8" viewBox="0 0 14 8"><path d="M1 2h11M1 2l2.500-1.800M3 5.500h10M13 5.500l-2.500 1.800" stroke="#8a8a8a" stroke-width="1" fill="none"/></svg>
<div class="a" style="left:161px;top:50px;width:1339px;height:3px;background:#f0a830"></div>
<div class="a" style="left:1500px;top:50px;width:13px;height:3px;background:#a4b2c0"></div>
<div class="a" style="left:161px;top:53px;width:1352px;height:28px;background:#a4b2c0;border-bottom:1px solid #8a96a2"></div>
<div class="a" style="left:161px;top:73px;width:1352px;height:2px;background:repeating-linear-gradient(90deg,#56606a 0 1px,transparent 1px 4.32px)"></div>
<div class="a" style="left:161px;top:71px;width:1352px;height:3px;background:repeating-linear-gradient(90deg,#4a545e 0 1px,transparent 1px 21.6px)"></div>
<div class="a" style="left:161px;top:62px;width:1px;height:13px;background:#20262e"></div>
<div class="t" style="left:164px;top:61px;font-size:10.5px;color:#39424c;letter-spacing:-0.45px">00:00:00:00</div>
<div class="a" style="left:269px;top:62px;width:1px;height:13px;background:#20262e"></div>
<div class="t" style="left:272px;top:61px;font-size:10.5px;color:#39424c;letter-spacing:-0.45px">00:00:58:00</div>
<div class="a" style="left:377px;top:62px;width:1px;height:13px;background:#20262e"></div>
<div class="t" style="left:380px;top:61px;font-size:10.5px;color:#39424c;letter-spacing:-0.45px">00:01:56:00</div>
<div class="a" style="left:485px;top:62px;width:1px;height:13px;background:#20262e"></div>
<div class="t" style="left:488px;top:61px;font-size:10.5px;color:#39424c;letter-spacing:-0.45px">00:02:54:00</div>
<div class="a" style="left:593px;top:62px;width:1px;height:13px;background:#20262e"></div>
<div class="t" style="left:596px;top:61px;font-size:10.5px;color:#39424c;letter-spacing:-0.45px">00:03:52:00</div>
<div class="a" style="left:701px;top:62px;width:1px;height:13px;background:#20262e"></div>
<div class="t" style="left:704px;top:61px;font-size:10.5px;color:#39424c;letter-spacing:-0.45px">00:04:50:00</div>
<div class="a" style="left:809px;top:62px;width:1px;height:13px;background:#20262e"></div>
<div class="t" style="left:812px;top:61px;font-size:10.5px;color:#39424c;letter-spacing:-0.45px">00:05:48:00</div>
<div class="a" style="left:917px;top:62px;width:1px;height:13px;background:#20262e"></div>
<div class="t" style="left:920px;top:61px;font-size:10.5px;color:#39424c;letter-spacing:-0.45px">00:06:46:00</div>
<div class="a" style="left:1025px;top:62px;width:1px;height:13px;background:#20262e"></div>
<div class="t" style="left:1028px;top:61px;font-size:10.5px;color:#39424c;letter-spacing:-0.45px">00:07:44:00</div>
<div class="a" style="left:1133px;top:62px;width:1px;height:13px;background:#20262e"></div>
<div class="t" style="left:1136px;top:61px;font-size:10.5px;color:#39424c;letter-spacing:-0.45px">00:08:42:00</div>
<div class="a" style="left:1241px;top:62px;width:1px;height:13px;background:#20262e"></div>
<div class="t" style="left:1244px;top:61px;font-size:10.5px;color:#39424c;letter-spacing:-0.45px">00:09:40:00</div>
<div class="a" style="left:1349px;top:62px;width:1px;height:13px;background:#20262e"></div>
<div class="t" style="left:1352px;top:61px;font-size:10.5px;color:#39424c;letter-spacing:-0.45px">00:10:38:00</div>
<div class="a" style="left:1457px;top:62px;width:1px;height:13px;background:#20262e"></div>
<div class="t" style="left:1460px;top:61px;font-size:10.5px;color:#39424c;letter-spacing:-0.45px">00:11:36:00</div>
<div class="a" style="left:1513px;top:50px;width:15px;height:33px;background:#555"></div>
<div class="a" style="left:161px;top:82px;width:1352px;height:264px;background:#67676a"></div>
<div class="a" style="left:4px;top:82px;width:153px;height:264px;background:#2a2a2a"></div>
<div class="a" style="left:157px;top:50px;width:4px;height:296px;background:#3c3c3c"></div>
<div class="a" style="left:161px;top:82px;width:1352px;height:1px;background:#444"></div>
<div class="a" style="left:27px;top:82px;width:107px;height:53px;background:#2a2a2a;border-top:1px solid #444;border-left:1px solid #444"></div>
<div class="a" style="left:135px;top:82px;width:22px;height:53px;background:#2a2a2a;border-top:1px solid #444;border-left:1px solid #444"></div>
<div class="t" style="left:30px;top:88px;font-size:11px;color:#c4c4c4;letter-spacing:-0.5px">3 VA</div>
<svg style="left:118px;top:86px" width="10" height="13" viewBox="0 0 10 13"><path d="M1.2 0v13M8.800 0v13M1.2 1h7.600M1.2 6.500h7.600M1.2 12h7.600" stroke="#e8e8e8" stroke-width="1.3" fill="none"/></svg>
<svg style="left:32px;top:103px" width="5" height="8" viewBox="0 0 5 8"><path d="M0.3 0v8l4.500-4z" fill="#f0f0f0"/></svg>
<svg style="left:117px;top:107px" width="12" height="10" viewBox="0 0 12 10"><path d="M0.5 3.500h2L5.500 0.8v8.400L2.500 6.500h-2z" fill="#f0f0f0"/><path d="M7 2.500l2 2.500l-2 2.500M9.200 1.200L11.500 5L9.200 8.800" stroke="#f0f0f0" stroke-width="1" fill="none"/></svg>
<svg style="left:32px;top:123px" width="5" height="8" viewBox="0 0 5 8"><path d="M0.3 0v8l4.500-4z" fill="#f0f0f0"/></svg>
<div class="a" style="left:161px;top:102px;width:1352px;height:1px;background:#7c7c7f"></div>
<div class="a" style="left:161px;top:122px;width:1352px;height:1px;background:#7c7c7f"></div>
<div class="a" style="left:432px;top:83px;width:74px;height:20px;background:#c98a62;border:2px solid #2a74e4"></div>
<div class="a" style="left:435px;top:86px;width:25px;height:14px;background:#000;border-right:1px solid #f0d8c8"></div>
<div class="a" style="left:477px;top:86px;width:25px;height:14px;background:#000;border-right:1px solid #f0d8c8"></div>
<div class="a" style="left:432px;top:103px;width:74px;height:20px;background:#c98a62;border-bottom:1px solid #8a5a3c"></div>
<div class="t" style="left:434px;top:107px;font-size:11px;color:#2a1a10;letter-spacing:-0.1px">Color Matte</div>
<div class="a" style="left:432px;top:123px;width:74px;height:12px;background:#a9a9a9;border-top:1px solid #bdbdbd;border-bottom:1px solid #6e6e6e"></div>
<div class="a" style="left:161px;top:135px;width:1352px;height:1px;background:#3a3a3a"></div>
<div class="a" style="left:27px;top:135px;width:107px;height:34px;background:#5c5c5e;border-top:1px solid #444;border-left:1px solid #444"></div>
<div class="a" style="left:135px;top:135px;width:22px;height:34px;background:#5c5c5e;border-top:1px solid #444;border-left:1px solid #444"></div>
<div class="t" style="left:30px;top:141px;font-size:11px;color:#b8b8b8;letter-spacing:-0.5px">2 V</div>
<div class="a" style="left:112px;top:138px;width:21px;height:15px;background:#2a2a2a"></div>
<svg style="left:118px;top:139px" width="10" height="13" viewBox="0 0 10 13"><path d="M1.2 0v13M8.800 0v13M1.2 1h7.600M1.2 6.500h7.600M1.2 12h7.600" stroke="#e8e8e8" stroke-width="1.3" fill="none"/></svg>
<svg style="left:32px;top:156px" width="5" height="8" viewBox="0 0 5 8"><path d="M0.3 0v8l4.500-4z" fill="#f0f0f0"/></svg>
<div class="a" style="left:162px;top:136px;width:1338px;height:19px;background:#c4ba76;border-top:1px solid #d6cd8e;border-bottom:1px solid #8e8650"></div>
<div class="a" style="left:165px;top:139px;width:24px;height:13px;background:#000;border-right:1px solid #eee8c0;border-bottom:1px solid #eee8c0"></div>
<div class="a" style="left:1472px;top:139px;width:24px;height:13px;background:#050505"></div>
<div class="t" style="left:193px;top:140px;font-size:11px;color:#262618;letter-spacing:-0.02px">Cozumel Diving In A Coral Wonderland (4K) - An Underwater 3D Channel Film</div>
<svg style="left:162px;top:149px" width="8" height="7" viewBox="0 0 8 7"><path d="M0 0L8 7H0z" fill="#555"/></svg>
<svg style="left:1492px;top:135px" width="8" height="7" viewBox="0 0 8 7"><path d="M0 0h8v7z" fill="#666"/></svg>
<div class="a" style="left:162px;top:155px;width:1338px;height:13px;background:#a9a9a9;border-top:1px solid #bdbdbd;border-bottom:1px solid #6e6e6e"></div>
<div class="a" style="left:161px;top:168px;width:1352px;height:2px;background:#3a3a3a"></div>
<div class="a" style="left:27px;top:169px;width:107px;height:53px;background:#2a2a2a;border-top:1px solid #444;border-left:1px solid #444"></div>
<div class="a" style="left:135px;top:169px;width:22px;height:53px;background:#2a2a2a;border-top:1px solid #444;border-left:1px solid #444"></div>
<div class="a" style="left:4px;top:170px;width:22px;height:25px;background:#585858;border-top:1px solid #777;border-left:1px solid #777"></div>
<svg style="left:11px;top:178px" width="8" height="6" viewBox="0 0 8 6"><path d="M1.200 0v2q0 2.800 2.800 2.800t2.800-2.800V0" stroke="#fff" stroke-width="2.200" fill="none"/></svg>
<div class="a" style="left:4px;top:195px;width:22px;height:27px;background:#585858;border-top:1px solid #777;border-left:1px solid #777"></div>
<svg style="left:7px;top:204px" width="7" height="8" viewBox="0 0 7 8"><path d="M1.100 8V3q0-2.200 2.400-2.200t2.400 2.200V8M1.100 5.200h4.800" stroke="#fff" stroke-width="2" fill="none"/></svg>
<div class="t" style="left:16px;top:194px;font-size:12px;color:#c8c8c8;transform:scaleX(0.85);transform-origin:0 0">1</div>
<div class="t" style="left:16px;top:204px;font-size:12px;color:#b4b4b4;transform:scaleX(0.85);transform-origin:0 0">2</div>
<div class="t" style="left:30px;top:174px;font-size:11px;color:#c4c4c4;letter-spacing:-0.5px">1 VA</div>
<svg style="left:118px;top:173px" width="10" height="13" viewBox="0 0 10 13"><path d="M1.2 0v13M8.800 0v13M1.2 1h7.600M1.2 6.500h7.600M1.2 12h7.600" stroke="#e8e8e8" stroke-width="1.3" fill="none"/></svg>
<svg style="left:32px;top:190px" width="5" height="8" viewBox="0 0 5 8"><path d="M0.3 0v8l4.500-4z" fill="#f0f0f0"/></svg>
<svg style="left:117px;top:194px" width="12" height="10" viewBox="0 0 12 10"><path d="M0.5 3.500h2L5.500 0.8v8.400L2.500 6.500h-2z" fill="#f0f0f0"/><path d="M7 2.500l2 2.500l-2 2.500M9.200 1.200L11.500 5L9.200 8.800" stroke="#f0f0f0" stroke-width="1" fill="none"/></svg>
<svg style="left:32px;top:210px" width="5" height="8" viewBox="0 0 5 8"><path d="M0.3 0v8l4.500-4z" fill="#f0f0f0"/></svg>
<div class="a" style="left:162px;top:170px;width:1338px;height:19px;background:#c4ba76;border-top:1px solid #d6cd8e;border-bottom:1px solid #8e8650"></div>
<div class="a" style="left:165px;top:173px;width:24px;height:13px;background:#000;border-right:1px solid #eee8c0;border-bottom:1px solid #eee8c0"></div>
<div class="a" style="left:1472px;top:173px;width:24px;height:13px;background:#050505"></div>
<div class="t" style="left:193px;top:174px;font-size:11px;color:#262618;letter-spacing:-0.02px">Cozumel Diving In A Coral Wonderland (4K) - An Underwater 3D Channel Film</div>
<svg style="left:162px;top:183px" width="8" height="7" viewBox="0 0 8 7"><path d="M0 0L8 7H0z" fill="#555"/></svg>
<svg style="left:1492px;top:169px" width="8" height="7" viewBox="0 0 8 7"><path d="M0 0h8v7z" fill="#666"/></svg>
<div class="a" style="left:162px;top:189px;width:1338px;height:20px;background:#97c26c;border-top:1px solid #a9d080;border-bottom:1px solid #5e7a44"></div>
<div class="t" style="left:164px;top:193px;font-size:11px;color:#262618;letter-spacing:-0.02px">Cozumel Diving In A Coral Wonderland (4K) - An Underwater 3D Channel Film</div>
<svg style="left:162px;top:203px" width="7" height="6" viewBox="0 0 7 6"><path d="M0 0L7 6H0z" fill="#555"/></svg>
<svg style="left:1493px;top:189px" width="7" height="6" viewBox="0 0 7 6"><path d="M0 0h7v6z" fill="#6a8a50"/></svg>
<div class="a" style="left:162px;top:209px;width:1338px;height:13px;background:#a9a9a9;border-top:1px solid #bdbdbd;border-bottom:1px solid #6e6e6e"></div>
<div class="a" style="left:4px;top:222px;width:1509px;height:4px;background:#3a3a3a"></div>
<div class="a" style="left:4px;top:223px;width:1509px;height:1px;background:#5a5a5a"></div>
<div class="a" style="left:27px;top:225px;width:107px;height:34px;background:#2a2a2a;border-top:1px solid #444;border-left:1px solid #444"></div>
<div class="a" style="left:135px;top:225px;width:22px;height:34px;background:#2a2a2a;border-top:1px solid #444;border-left:1px solid #444"></div>
<div class="t" style="left:30px;top:231px;font-size:11px;color:#c4c4c4;letter-spacing:-0.5px">1 T</div>
<svg style="left:118px;top:232px" width="10" height="9" viewBox="0 0 10 9"><path d="M0.5 1.500h9M5 1.500v7.500" stroke="#fff" stroke-width="2.600"/></svg>
<div class="a" style="left:161px;top:245px;width:1352px;height:1px;background:#7c7c7f"></div>
<div class="a" style="left:4px;top:259px;width:1509px;height:4px;background:#3a3a3a"></div>
<div class="a" style="left:4px;top:260px;width:1509px;height:1px;background:#5a5a5a"></div>
<div class="a" style="left:27px;top:262px;width:107px;height:21px;background:#2a2a2a;border-top:1px solid #444;border-left:1px solid #444"></div>
<div class="a" style="left:135px;top:262px;width:22px;height:21px;background:#2a2a2a;border-top:1px solid #444;border-left:1px solid #444"></div>
<svg style="left:32px;top:269px" width="5" height="8" viewBox="0 0 5 8"><path d="M0.3 0v8l4.500-4z" fill="#f0f0f0"/></svg>
<div class="t" style="left:39px;top:268px;font-size:11px;color:#c4c4c4;letter-spacing:-0.5px">1 A</div>
<svg style="left:117px;top:268px" width="12" height="10" viewBox="0 0 12 10"><path d="M0.5 3.500h2L5.500 0.8v8.400L2.500 6.500h-2z" fill="#f0f0f0"/><path d="M7 2.500l2 2.500l-2 2.500M9.200 1.200L11.500 5L9.200 8.800" stroke="#f0f0f0" stroke-width="1" fill="none"/></svg>
<div class="a" style="left:27px;top:283px;width:107px;height:21px;background:#2a2a2a;border-top:1px solid #444;border-left:1px solid #444"></div>
<div class="a" style="left:135px;top:283px;width:22px;height:21px;background:#2a2a2a;border-top:1px solid #444;border-left:1px solid #444"></div>
<svg style="left:32px;top:290px" width="5" height="8" viewBox="0 0 5 8"><path d="M0.3 0v8l4.500-4z" fill="#f0f0f0"/></svg>
<div class="t" style="left:39px;top:289px;font-size:11px;color:#c4c4c4;letter-spacing:-0.5px">2 A</div>
<svg style="left:117px;top:289px" width="12" height="10" viewBox="0 0 12 10"><path d="M0.5 3.500h2L5.500 0.8v8.400L2.500 6.500h-2z" fill="#f0f0f0"/><path d="M7 2.500l2 2.500l-2 2.500M9.200 1.200L11.500 5L9.200 8.800" stroke="#f0f0f0" stroke-width="1" fill="none"/></svg>
<div class="a" style="left:161px;top:283px;width:1352px;height:1px;background:#454545"></div>
<div class="a" style="left:27px;top:304px;width:107px;height:21px;background:#2a2a2a;border-top:1px solid #444;border-left:1px solid #444"></div>
<div class="a" style="left:135px;top:304px;width:22px;height:21px;background:#2a2a2a;border-top:1px solid #444;border-left:1px solid #444"></div>
<svg style="left:32px;top:311px" width="5" height="8" viewBox="0 0 5 8"><path d="M0.3 0v8l4.500-4z" fill="#f0f0f0"/></svg>
<div class="t" style="left:39px;top:310px;font-size:11px;color:#c4c4c4;letter-spacing:-0.5px">3 A</div>
<svg style="left:117px;top:310px" width="12" height="10" viewBox="0 0 12 10"><path d="M0.5 3.500h2L5.500 0.8v8.400L2.500 6.500h-2z" fill="#f0f0f0"/><path d="M7 2.500l2 2.500l-2 2.500M9.200 1.200L11.500 5L9.200 8.800" stroke="#f0f0f0" stroke-width="1" fill="none"/></svg>
<div class="a" style="left:161px;top:304px;width:1352px;height:1px;background:#454545"></div>
<div class="a" style="left:27px;top:325px;width:107px;height:21px;background:#2a2a2a;border-top:1px solid #444;border-left:1px solid #444"></div>
<div class="a" style="left:135px;top:325px;width:22px;height:21px;background:#2a2a2a;border-top:1px solid #444;border-left:1px solid #444"></div>
<svg style="left:32px;top:332px" width="5" height="8" viewBox="0 0 5 8"><path d="M0.3 0v8l4.500-4z" fill="#f0f0f0"/></svg>
<div class="t" style="left:39px;top:331px;font-size:11px;color:#c4c4c4;letter-spacing:-0.5px">4 A</div>
<svg style="left:117px;top:331px" width="12" height="10" viewBox="0 0 12 10"><path d="M0.5 3.500h2L5.500 0.8v8.400L2.500 6.500h-2z" fill="#f0f0f0"/><path d="M7 2.500l2 2.500l-2 2.500M9.200 1.200L11.500 5L9.200 8.800" stroke="#f0f0f0" stroke-width="1" fill="none"/></svg>
<div class="a" style="left:161px;top:325px;width:1352px;height:1px;background:#454545"></div>
<div class="a" style="left:4px;top:263px;width:22px;height:20px;background:#585858;border-top:1px solid #777;border-left:1px solid #777"></div>
<svg style="left:7px;top:269px" width="7" height="8" viewBox="0 0 7 8"><path d="M1.100 8V3q0-2.200 2.400-2.200t2.400 2.200V8M1.100 5.200h4.800" stroke="#fff" stroke-width="2" fill="none"/></svg>
<div class="t" style="left:16px;top:262px;font-size:12px;color:#c8c8c8;transform:scaleX(0.85);transform-origin:0 0">3</div>
<div class="t" style="left:16px;top:272px;font-size:12px;color:#b4b4b4;transform:scaleX(0.85);transform-origin:0 0">4</div>
<div class="a" style="left:4px;top:284px;width:22px;height:20px;background:#585858;border-top:1px solid #777;border-left:1px solid #777"></div>
<svg style="left:7px;top:290px" width="7" height="8" viewBox="0 0 7 8"><path d="M1.100 8V3q0-2.200 2.400-2.200t2.400 2.200V8M1.100 5.200h4.800" stroke="#fff" stroke-width="2" fill="none"/></svg>
<div class="t" style="left:16px;top:283px;font-size:12px;color:#c8c8c8;transform:scaleX(0.85);transform-origin:0 0">5</div>
<div class="t" style="left:16px;top:293px;font-size:12px;color:#b4b4b4;transform:scaleX(0.85);transform-origin:0 0">6</div>
<div class="a" style="left:4px;top:305px;width:22px;height:20px;background:#585858;border-top:1px solid #777;border-left:1px solid #777"></div>
<svg style="left:7px;top:311px" width="7" height="8" viewBox="0 0 7 8"><path d="M1.100 8V3q0-2.200 2.400-2.200t2.400 2.200V8M1.100 5.200h4.800" stroke="#fff" stroke-width="2" fill="none"/></svg>
<div class="t" style="left:16px;top:304px;font-size:12px;color:#c8c8c8;transform:scaleX(0.85);transform-origin:0 0">7</div>
<div class="t" style="left:16px;top:314px;font-size:12px;color:#b4b4b4;transform:scaleX(0.85);transform-origin:0 0">8</div>
<div class="a" style="left:162px;top:263px;width:1338px;height:20px;background:#97c26c;border-top:1px solid #a9d080;border-bottom:1px solid #5e7a44"></div>
<div class="t" style="left:164px;top:267px;font-size:11px;color:#262618;letter-spacing:-0.02px">Cozumel Diving In A Coral Wonderland (4K) - An Underwater 3D Channel Film</div>
<svg style="left:162px;top:277px" width="7" height="6" viewBox="0 0 7 6"><path d="M0 0L7 6H0z" fill="#555"/></svg>
<svg style="left:1493px;top:263px" width="7" height="6" viewBox="0 0 7 6"><path d="M0 0h7v6z" fill="#6a8a50"/></svg>
<div class="a" style="left:465px;top:64px;width:1px;height:18px;background:#8a2a2a"></div>
<div class="a" style="left:465px;top:82px;width:1px;height:54px;background:#e040e0"></div>
<div class="a" style="left:465px;top:136px;width:1px;height:86px;background:#d04040"></div>
<div class="a" style="left:465px;top:222px;width:1px;height:124px;background:#40d0d8"></div>
<svg style="left:451px;top:50px" width="30" height="15" viewBox="0 0 30 15"><path d="M1.500 1h27L15 13.500z" fill="#484848" stroke="#fff" stroke-width="1.600"/></svg>
<div class="a" style="left:1513px;top:82px;width:15px;height:264px;background:#4a4a4a"></div>
<div class="a" style="left:1514px;top:83px;width:13px;height:13px;background:#5a5a5a;border:1px solid #6e6e6e;border-radius:2px"></div>
<svg style="left:1515px;top:85px" width="11" height="9" viewBox="0 0 11 9"><path d="M2 6.500L5.500 2.500L9 6.500z" fill="#f0f0f0"/></svg>
<div class="a" style="left:1514px;top:98px;width:13px;height:54px;background:#5e5e5e;border:1px solid #747474;border-radius:3px"></div>
<div class="a" style="left:1517px;top:125px;width:7px;height:1px;background:#ddd"></div>
<div class="a" style="left:1517px;top:127px;width:7px;height:1px;background:#ddd"></div>
<div class="a" style="left:1514px;top:153px;width:13px;height:14px;background:#5a5a5a;border:1px solid #6e6e6e;border-radius:2px"></div>
<svg style="left:1515px;top:155px" width="11" height="9" viewBox="0 0 11 9"><path d="M2 2.500L5.500 6.500L9 2.500z" fill="#f0f0f0"/></svg>
<div class="a" style="left:1514px;top:170px;width:13px;height:13px;background:#505050;border:1px solid #6e6e6e;border-radius:2px"></div>
<svg style="left:1515px;top:172px" width="11" height="9" viewBox="0 0 11 9"><path d="M2 6.500L5.500 2.500L9 6.500z" fill="#7a7a7a"/></svg>
<div class="a" style="left:1514px;top:207px;width:13px;height:14px;background:#505050;border:1px solid #6e6e6e;border-radius:2px"></div>
<svg style="left:1515px;top:209px" width="11" height="9" viewBox="0 0 11 9"><path d="M2 2.500L5.500 6.500L9 2.500z" fill="#7a7a7a"/></svg>
<div class="a" style="left:1514px;top:226px;width:13px;height:13px;background:#505050;border:1px solid #6e6e6e;border-radius:2px"></div>
<svg style="left:1515px;top:228px" width="11" height="9" viewBox="0 0 11 9"><path d="M2 6.500L5.500 2.500L9 6.500z" fill="#7a7a7a"/></svg>
<div class="a" style="left:1514px;top:244px;width:13px;height:14px;background:#505050;border:1px solid #6e6e6e;border-radius:2px"></div>
<svg style="left:1515px;top:246px" width="11" height="9" viewBox="0 0 11 9"><path d="M2 2.500L5.500 6.500L9 2.500z" fill="#7a7a7a"/></svg>
<div class="a" style="left:1514px;top:263px;width:13px;height:13px;background:#5a5a5a;border:1px solid #6e6e6e;border-radius:2px"></div>
<svg style="left:1515px;top:265px" width="11" height="9" viewBox="0 0 11 9"><path d="M2 6.500L5.500 2.500L9 6.500z" fill="#f0f0f0"/></svg>
<div class="a" style="left:1514px;top:277px;width:13px;height:31px;background:#5e5e5e;border:1px solid #747474;border-radius:3px"></div>
<div class="a" style="left:1517px;top:292px;width:7px;height:1px;background:#ddd"></div>
<div class="a" style="left:1517px;top:294px;width:7px;height:1px;background:#ddd"></div>
<div class="a" style="left:1514px;top:330px;width:13px;height:14px;background:#5a5a5a;border:1px solid #6e6e6e;border-radius:2px"></div>
<svg style="left:1515px;top:332px" width="11" height="9" viewBox="0 0 11 9"><path d="M2 2.500L5.500 6.500L9 2.500z" fill="#f0f0f0"/></svg>
</div>
<!-- ================= INFO WINDOW ================= -->
<div class="win" style="left:1535px;top:590px;width:191px;height:346px;overflow:hidden">
<svg style="left:175px;top:3px" width="11" height="11" viewBox="0 0 11 11"><path d="M1 1L10 10M10 1L1 10" stroke="#f0f0f0" stroke-width="2"/></svg>
<div class="a" style="left:2px;top:17px;width:190px;height:8px;background:linear-gradient(#2c2c2c,#404040)"></div>
<div class="a" style="left:7px;top:25px;width:162px;height:104px;background:#636365;overflow:hidden"></div>
<div class="a" style="left:8px;top:25.5px;width:79px;height:12.5px;background:#68686a;border-top:1px solid #7c7c7e;overflow:hidden"><span class="inf" style="left:1px;top:1px">Nom du clip</span></div>
<div class="a" style="left:88px;top:25.5px;width:80px;height:12.5px;background:#68686a;border-top:1px solid #7c7c7e;overflow:hidden"><span class="inf" style="left:2px;top:1px">Color Matte</span></div>
<div class="a" style="left:8px;top:39.0px;width:79px;height:12.5px;background:#68686a;border-top:1px solid #7c7c7e;overflow:hidden"><span class="inf" style="left:1px;top:1px">Point d'entrée …</span></div>
<div class="a" style="left:88px;top:39.0px;width:80px;height:12.5px;background:#68686a;border-top:1px solid #7c7c7e;overflow:hidden"><span class="inf" style="left:2px;top:1px">00:02:25:12</span></div>
<div class="a" style="left:8px;top:52.5px;width:79px;height:12.5px;background:#68686a;border-top:1px solid #7c7c7e;overflow:hidden"><span class="inf" style="left:1px;top:1px">Point de sortie …</span></div>
<div class="a" style="left:88px;top:52.5px;width:80px;height:12.5px;background:#68686a;border-top:1px solid #7c7c7e;overflow:hidden"><span class="inf" style="left:2px;top:1px">00:03:05:01</span></div>
<div class="a" style="left:8px;top:66.0px;width:79px;height:12.5px;background:#68686a;border-top:1px solid #7c7c7e;overflow:hidden"><span class="inf" style="left:1px;top:1px">Durée de la tim…</span></div>
<div class="a" style="left:88px;top:66.0px;width:80px;height:12.5px;background:#68686a;border-top:1px solid #7c7c7e;overflow:hidden"><span class="inf" style="left:2px;top:1px">00:00:39:14</span></div>
<div class="a" style="left:8px;top:79.5px;width:79px;height:12.5px;background:#68686a;border-top:1px solid #7c7c7e;overflow:hidden"><span class="inf" style="left:1px;top:1px">Figer l'image</span></div>
<div class="a" style="left:88px;top:79.5px;width:80px;height:12.5px;background:#68686a;border-top:1px solid #7c7c7e;overflow:hidden"><span class="inf" style="left:2px;top:1px">Désactiver</span></div>
<div class="a" style="left:8px;top:93.0px;width:79px;height:12.5px;background:#68686a;border-top:1px solid #7c7c7e;overflow:hidden"><span class="inf" style="left:1px;top:1px">Remappage te…</span></div>
<div class="a" style="left:88px;top:93.0px;width:80px;height:12.5px;background:#68686a;border-top:1px solid #7c7c7e;overflow:hidden"><span class="inf" style="left:2px;top:1px">Désactiver</span></div>
<div class="a" style="left:8px;top:106.5px;width:79px;height:12.5px;background:#68686a;border-top:1px solid #7c7c7e;overflow:hidden"><span class="inf" style="left:1px;top:1px">Codec</span></div>
<div class="a" style="left:88px;top:106.5px;width:80px;height:12.5px;background:#68686a;border-top:1px solid #7c7c7e;overflow:hidden"><span class="inf" style="left:2px;top:1px">Color Matte</span></div>
<div class="a" style="left:8px;top:120.0px;width:79px;height:12.5px;background:#68686a;border-top:1px solid #7c7c7e;overflow:hidden"><span class="inf" style="left:1px;top:1px">Rapport haute…</span></div>
<div class="a" style="left:88px;top:120.0px;width:80px;height:12.5px;background:#68686a;border-top:1px solid #7c7c7e;overflow:hidden"><span class="inf" style="left:2px;top:1px">1.000</span></div>
<div class="a" style="left:7px;top:129px;width:180px;height:3px;background:#484848"></div>
<div class="a" style="left:170px;top:25px;width:14px;height:104px;background:#3c3c3c"></div>
<div class="a" style="left:171px;top:26px;width:12px;height:13px;background:#5a5a5a;border:1px solid #727272;border-radius:2px"></div>
<svg style="left:172px;top:28px" width="10" height="9" viewBox="0 0 10 9"><path d="M1.500 6.500L5 2.500L8.500 6.500z" fill="#f0f0f0"/></svg>
<div class="a" style="left:171px;top:40px;width:12px;height:57px;background:#5e5e5e;border:1px solid #747474;border-radius:3px"></div>
<div class="a" style="left:174px;top:66px;width:6px;height:1px;background:#ddd"></div>
<div class="a" style="left:174px;top:68px;width:6px;height:1px;background:#ddd"></div>
<div class="a" style="left:174px;top:70px;width:6px;height:1px;background:#ddd"></div>
<div class="a" style="left:171px;top:114px;width:12px;height:14px;background:#5a5a5a;border:1px solid #727272;border-radius:2px"></div>
<svg style="left:172px;top:116px" width="10" height="9" viewBox="0 0 10 9"><path d="M1.500 2.500L5 6.500L8.500 2.500z" fill="#f0f0f0"/></svg>
<div class="a" style="left:91px;top:131px;width:10px;height:1px;background:#ccc"></div>
<div class="a" style="left:91px;top:133px;width:10px;height:1px;background:#ccc"></div>
<svg style="left:8px;top:136px" width="13" height="13" viewBox="0 0 13 13"><rect x="0.500" y="0.500" width="12" height="12" fill="#f0e8b8" stroke="#222" stroke-width="1"/><path d="M1 2h11M1 11h11" stroke="#222" stroke-width="1" stroke-dasharray="1 1"/></svg>
<div class="t" style="left:27px;top:137px;font-size:11px;color:#e8e8e8">1/1</div>
<svg style="left:75px;top:135px" width="14" height="15" viewBox="0 0 14 15"><rect x="0.500" y="0.500" width="11" height="12" fill="#f0f0f0" stroke="#222" stroke-width="0.8"/><path d="M2 3h8M2 5.500h8M2 8h5" stroke="#444" stroke-width="1"/><circle cx="10" cy="11.500" r="2.600" fill="#222" stroke="#eee" stroke-width="0.8"/></svg>
<div class="t" style="left:95px;top:137px;font-size:11px;color:#e8e8e8">1</div>
<svg style="left:136px;top:135px" width="15" height="15" viewBox="0 0 15 15"><circle cx="4" cy="4.500" r="3" fill="none" stroke="#9fd6d6" stroke-width="1.600"/><path d="M11 1.500L14 8H8z" fill="none" stroke="#9fd6d6" stroke-width="1.400"/><rect x="5.500" y="8.500" width="5" height="5" fill="none" stroke="#f07030" stroke-width="1.500"/></svg>
<svg style="left:163px;top:136px" width="13" height="13" viewBox="0 0 13 13"><path d="M1 1L12 12M12 1L1 12" stroke="#c8c8c8" stroke-width="1.600"/></svg>
<div class="a" style="left:7px;top:155px;width:178px;height:191px;background:#69696b"></div>
<div class="a" style="left:7px;top:155px;width:178px;height:18px;background:#dcdcf8"></div>
<svg style="left:18px;top:157px" width="12" height="12" viewBox="0 0 12 12"><rect x="0.500" y="0.500" width="11" height="11" fill="#fff" stroke="#333" stroke-width="1"/><path d="M2.500 6l2.500 3l4.500-6.500" stroke="#111" stroke-width="1.800" fill="none"/></svg>
<svg style="left:40px;top:158px" width="13" height="12" viewBox="0 0 13 12"><path d="M1 3v6M12 3v6" stroke="#2a6a5a" stroke-width="1.400"/><rect x="3" y="1.500" width="7" height="9" fill="#e8f0ec" stroke="#2a6a5a" stroke-width="1.400"/><rect x="5" y="4" width="3" height="4" fill="#2a6a5a"/></svg>
<div class="t" style="left:63px;top:159px;font-size:10.500px;color:#1a1a2a;letter-spacing:-0.250px">Outil de présentat…</div>
</div>
<div class="t" style="left:1527px;top:919px;width:152px;height:17px;background:rgba(146,146,148,0.92);color:#6a6a6c;font-size:10.500px;padding:3px 0 0 5px;letter-spacing:-0.050px">Espace de travail Windows Ink</div>
<!-- ================= TASKBAR ================= -->
<div class="a" style="left:0;top:936px;width:1728px;height:36px;background:#1d2124">
<div class="a" style="left:0px;top:0px;width:840px;height:9px;background:#24282b"></div>
<div class="a" style="left:160px;top:1px;width:18px;height:8px;background:#2b2f32"></div>
<div class="t" style="left:883px;top:23px;font-size:9.500px;color:#383e44;letter-spacing:0">Édition stéréoscopique</div>
<div class="a" style="left:875px;top:20px;width:1px;height:14px;background:#3a4046"></div>
<div class="a" style="left:990px;top:20px;width:1px;height:14px;background:#3a4046"></div>
<div class="t" style="left:997px;top:23px;font-size:9.500px;color:#383e44;letter-spacing:0">Pause</div>
<div class="a" style="left:1105px;top:20px;width:1px;height:14px;background:#3a4046"></div>
<div class="a" style="left:1121px;top:20px;width:1px;height:14px;background:#3a4046"></div>
<div class="t" style="left:1127px;top:23px;font-size:9.500px;color:#383e44;letter-spacing:0">Mode Insertion</div>
<div class="a" style="left:1203px;top:20px;width:1px;height:14px;background:#3a4046"></div>
<div class="t" style="left:1210px;top:23px;font-size:9.500px;color:#383e44;letter-spacing:0">Resynchronis…</div>
<div class="a" style="left:1283px;top:20px;width:1px;height:14px;background:#3a4046"></div>
<div class="a" style="left:1291px;top:22px;width:12px;height:9px;border:1px solid #343a40"></div>
<div class="a" style="left:1322px;top:20px;width:1px;height:14px;background:#3a4046"></div>
<div class="t" style="left:1330px;top:23px;font-size:9.500px;color:#383e44;letter-spacing:0">Disque :19% est en cours d'utilisation (H:)</div>
<svg style="left:14px;top:11px" width="16" height="16" viewBox="0 0 16 16"><path d="M0 2.300L6.500 1.400V7.500H0zM7.500 1.250L16 0V7.500H7.500zM0 8.500H6.500V14.600L0 13.700zM7.500 8.500H16V16L7.500 14.750z" fill="#fff"/></svg>
<svg style="left:57px;top:11px" width="15" height="15" viewBox="0 0 15 15"><circle cx="7.500" cy="7.500" r="5.800" fill="none" stroke="#fff" stroke-width="2"/></svg>
<svg style="left:98px;top:11px" width="18" height="14" viewBox="0 0 18 14"><rect x="3.500" y="1" width="11" height="12" fill="none" stroke="#fff" stroke-width="1.300"/><path d="M1 3v8M17 3v8" stroke="#fff" stroke-width="1.300"/></svg>
<svg style="left:143px;top:8px" width="22" height="20" viewBox="0 0 22 20"><rect x="6" y="9" width="15" height="10" fill="#b8b8b8"/><rect x="7" y="3" width="13" height="7" fill="#e8e8e8"/><rect x="8" y="5" width="10" height="3" fill="#b050b0"/><rect x="9" y="12" width="12" height="6" fill="#8a8a8a"/><path d="M1 8q4-1 6 3t-3 3z" fill="#e8e0e8"/><circle cx="3" cy="9" r="1.500" fill="#d040a0"/></svg>
<svg style="left:188px;top:9px" width="22" height="21" viewBox="0 0 22 21"><path d="M1 10Q2 1 11 1q9 0 9.500 9.500v2H7.500q0.500 4 5.500 4q3.500 0 6-1.500v4Q16 20.500 12 20.500q-8.500 0-9-8q1-4 5-6.500Q4 6 1 10zM7.500 8.500h7q0-3.500-3.500-3.500t-3.500 3.500z" fill="#1583dc"/></svg>
<svg style="left:231px;top:9px" width="21" height="21" viewBox="0 0 21 21"><defs><radialGradient id="ge" cx="0.400" cy="0.350" r="0.700"><stop offset="0" stop-color="#e8e8ec"/><stop offset="1" stop-color="#7a7e88"/></radialGradient></defs><circle cx="10.500" cy="10.500" r="10" fill="url(#ge)"/><path d="M2 9q8-5 17-1M1.500 13q9-5 18-1" stroke="#fff" stroke-width="1.500" fill="none" opacity="0.800"/><rect x="9" y="15" width="9" height="5" rx="1" fill="#444"/></svg>
<svg style="left:276px;top:10px" width="20" height="18" viewBox="0 0 20 18"><path d="M0.500 2h6l1.500 2H19.500V17H0.500z" fill="#f3c64a"/><path d="M0.500 5H19.500V17H0.500z" fill="#fbdc74"/><rect x="5" y="11" width="10" height="6" fill="#3b98e0"/><rect x="7.500" y="13.500" width="5" height="3.500" fill="#fbdc74"/></svg>
<svg style="left:320px;top:9px" width="20" height="20" viewBox="0 0 20 20"><rect x="3" y="2" width="15" height="13" fill="#5aa84a" transform="rotate(6 10 8)"/><rect x="2" y="4" width="15" height="12" fill="#e8a040" transform="rotate(-4 10 10)"/><rect x="3" y="6" width="14" height="10" fill="#7ab8e8"/><rect x="10" y="8" width="5" height="4" fill="#e86a4a"/><path d="M0 17q8 3 15-1" stroke="#e8c040" stroke-width="2" fill="none"/></svg>
<svg style="left:363px;top:11px" width="20" height="16" viewBox="0 0 20 16"><path d="M3 3L16 1l3 9l-13 4z" fill="#9aa0a8"/><path d="M3 3l3 11l-4-2z" fill="#6a7078"/><path d="M6 5l3 6M9 5l-2 6M13 4q2 0 1 3l-1 2" stroke="#2a5aa8" stroke-width="1.200" fill="none"/></svg>
<svg style="left:407px;top:7px" width="20" height="23" viewBox="0 0 20 23"><path d="M6 7q0-5.500 4-5.500t4 5.500" fill="none" stroke="#e8e8e8" stroke-width="1.300"/><path d="M0.500 7h19v15H0.500z" fill="#f4f4f4"/><rect x="5" y="10" width="4.300" height="4.300" fill="#f25022"/><rect x="10.500" y="10" width="4.300" height="4.300" fill="#7fba00"/><rect x="5" y="15.500" width="4.300" height="4.300" fill="#00a4ef"/><rect x="10.500" y="15.500" width="4.300" height="4.300" fill="#ffb900"/></svg>
<div class="a" style="left:442px;top:0px;width:42px;height:36px;background:#353a3f"></div>
<div class="a" style="left:442px;top:34px;width:42px;height:2px;background:#8fa0b0"></div>
<svg style="left:451px;top:9px" width="24" height="20" viewBox="0 0 24 20"><rect x="1" y="13.500" width="22" height="4" fill="#9a28b8"/><path d="M4 2.500L20.500 9.500L7.500 17z" fill="none" stroke="#5fd020" stroke-width="2.200" stroke-linejoin="miter"/></svg>
<svg style="left:495px;top:8px" width="22" height="23" viewBox="0 0 22 23"><path d="M2 2v18" stroke="#e03030" stroke-width="1.300"/><path d="M3.500 2v18" stroke="#30c030" stroke-width="1"/><path d="M5 2v18" stroke="#3060e0" stroke-width="1.300"/><circle cx="12" cy="11.500" r="3" fill="#6a6a6a"/><path d="M13 5q5 6.500 0 13M16.500 3q7 8.500 0 17" stroke="#0c0c0c" stroke-width="2.200" fill="none"/><path d="M10 2v3" stroke="#444" stroke-width="1"/></svg>
<svg style="left:539px;top:8px" width="22" height="22" viewBox="0 0 22 22"><path d="M6 2h13l-3 16H2z" fill="#a8d8e8"/><path d="M8 4h9l-2.500 12H5z" fill="#e0f2f8"/><path d="M2 18h14l1 2H3z" fill="#6a8aa0"/></svg>
<svg style="left:584px;top:7px" width="21" height="23" viewBox="0 0 21 23"><rect x="1" y="9" width="15" height="13" fill="#d8c838"/><rect x="2.500" y="16" width="12" height="5" fill="#8aa838"/><circle cx="12" cy="9" r="8" fill="#f0b818"/><circle cx="12" cy="9" r="3.600" fill="#7a3a10"/></svg>
<svg style="left:630px;top:7px" width="16" height="23" viewBox="0 0 16 23"><rect x="0.500" y="0.500" width="15" height="22" fill="#f4f4f4"/><rect x="2.500" y="2.500" width="11" height="3.500" fill="#222"/><g fill="#222"><rect x="2.500" y="8" width="2.800" height="2.800"/><rect x="6.600" y="8" width="2.800" height="2.800"/><rect x="10.700" y="8" width="2.800" height="2.800"/><rect x="2.500" y="12.500" width="2.800" height="2.800"/><rect x="6.600" y="12.500" width="2.800" height="2.800"/><rect x="10.700" y="12.500" width="2.800" height="2.800"/><rect x="2.500" y="17" width="2.800" height="2.800"/><rect x="6.600" y="17" width="2.800" height="2.800"/><rect x="10.700" y="17" width="2.800" height="2.800"/></g></svg>
<svg style="left:675px;top:7px" width="14" height="22" viewBox="0 0 14 22"><path d="M0.500 0.500H9l4.500 4.500V21.500H0.500z" fill="#e4e4e4"/><path d="M9 0.500V5h4.500z" fill="#6a6a6a"/></svg>
<svg style="left:717px;top:9px" width="20" height="20" viewBox="0 0 20 20"><rect x="8" y="2.500" width="11.500" height="15" fill="#f4f4f4" stroke="#2b579a" stroke-width="0.800"/><path d="M10 6h8M10 8.500h8M10 11h8M10 13.500h8" stroke="#2b579a" stroke-width="1"/><path d="M0.500 2L11.500 0.500V19.500L0.500 18z" fill="#2b579a"/><path d="M3 6.500l1.500 7l1.500-6l1.500 6l1.500-7" stroke="#fff" stroke-width="1.300" fill="none"/></svg>
<svg style="left:760px;top:9px" width="21" height="20" viewBox="0 0 21 20"><rect x="9" y="4" width="11.500" height="11" fill="#f4f4f4" stroke="#0072c6" stroke-width="0.800"/><path d="M9 5l5.700 5L20.500 5" stroke="#0072c6" stroke-width="1.200" fill="none"/><path d="M0.500 2L11.500 0.500V19.500L0.500 18z" fill="#0072c6"/><ellipse cx="6" cy="10" rx="2.600" ry="3.400" fill="none" stroke="#fff" stroke-width="1.500"/></svg>
<div class="a" style="left:754px;top:34px;width:36px;height:2px;background:#8fa0b0"></div>
<svg style="left:804px;top:8px" width="22" height="23" viewBox="0 0 22 23"><circle cx="10" cy="10" r="9.500" fill="#e8e8e8"/><path d="M10 10L1.800 5.200A9.500 9.500 0 0 1 18.200 5.200z" fill="#db4437"/><path d="M10 10L18.200 5.200A9.500 9.500 0 0 1 10 19.500z" fill="#f4c20d"/><path d="M10 10L10 19.500A9.500 9.500 0 0 1 1.800 5.200z" fill="#0f9d58"/><circle cx="10" cy="10" r="4.300" fill="#f4f4f4"/><circle cx="10" cy="10" r="3.400" fill="#4285f4"/><circle cx="15" cy="17" r="4" fill="#f0b080"/><circle cx="15" cy="21" r="3.500" fill="#e89858"/><circle cx="13.500" cy="16.500" r="0.700" fill="#222"/><circle cx="16.500" cy="16.500" r="0.700" fill="#222"/></svg>
<div class="a" style="left:797px;top:34px;width:36px;height:2px;background:#8fa0b0"></div>
<svg style="left:1495px;top:10px" width="13" height="15.5" viewBox="0 0 14 17"><circle cx="9.500" cy="3.500" r="2.300" fill="none" stroke="#fff" stroke-width="1.200"/><circle cx="4.500" cy="8" r="2.300" fill="none" stroke="#fff" stroke-width="1.200"/><path d="M0.800 16q0-5 4-5q1.500 0 2.500 1M6 10q1-3.500 4-3.500q3.500 0 3.500 3.500" fill="none" stroke="#fff" stroke-width="1.200"/></svg>
<svg style="left:1528px;top:12px" width="12" height="8" viewBox="0 0 12 8"><path d="M1 7L6 1.500L11 7" stroke="#fff" stroke-width="1.300" fill="none"/></svg>
<svg style="left:1548px;top:12px" width="15" height="12.5" viewBox="0 0 15 14"><rect x="2.500" y="1" width="12" height="8.500" fill="none" stroke="#fff" stroke-width="1.200"/><path d="M8.500 9.500v3M5 12.500h7M0.500 0.500h3.500v4h-3.500z" stroke="#fff" stroke-width="1.200" fill="#1d2124"/></svg>
<svg style="left:1570px;top:12px" width="16" height="12.5" viewBox="0 0 17 14"><path d="M0.500 4.500h2.500L7 1v12L3 9.500h-2.500z" fill="none" stroke="#fff" stroke-width="1.200"/><path d="M9.500 4.500q1.500 2.500 0 5M12 2.500q3 4.500 0 9M14.500 1q4 6 0 12" stroke="#fff" stroke-width="1.100" fill="none"/></svg>
<div class="a" style="left:1589px;top:0px;width:29px;height:36px;background:#2c3135"></div>
<svg style="left:1595px;top:9px" width="17" height="18" viewBox="0 0 17 18"><path d="M3 15q4-11 9-13q3 0 1 4q-3 5-9 7q-4 0-2-4q2-3 6-3q6-1 8 2" stroke="#fff" stroke-width="1.400" fill="none"/><path d="M1 17l3-2" stroke="#fff" stroke-width="1.400"/></svg>
<div class="t" style="left:1636px;top:5px;font-size:10.800px;color:#fff;letter-spacing:-0.300px;-webkit-text-stroke:0.200px #fff">09:04</div>
<div class="t" style="left:1623px;top:21px;font-size:10.800px;color:#fff;letter-spacing:-0.300px;-webkit-text-stroke:0.200px #fff">26/04/2018</div>
<svg style="left:1690px;top:10px" width="16" height="16" viewBox="0 0 16 16"><path d="M0.700 0.700h14.600v10.600H10l-2.500 3v-3H0.700z" fill="none" stroke="#fff" stroke-width="1.200"/></svg>
</div>
<!-- ================= RED ANNOTATION ================= -->
<svg style="left:0;top:0;pointer-events:none" width="1728" height="972" viewBox="0 0 1728 972"><g fill="none" stroke="#ed1c24" stroke-linecap="round" stroke-linejoin="round">
<path d="M1024.0 12.5C1027.7 15.4 1037.3 24.0 1046.0 30.0C1054.7 36.0 1064.3 42.3 1076.0 48.5C1087.7 54.7 1101.7 60.2 1116.0 67.0C1130.3 73.8 1146.7 81.7 1162.0 89.0C1177.3 96.3 1192.5 103.5 1208.0 111.0C1223.5 118.5 1239.5 126.2 1255.0 134.0C1270.5 141.8 1285.7 149.3 1301.0 157.5C1316.3 165.7 1333.5 176.1 1347.0 183.0C1360.5 189.9 1373.2 195.5 1382.0 199.0C1390.8 202.5 1391.5 201.4 1400.0 204.0C1408.5 206.6 1420.7 211.7 1433.0 214.5C1445.3 217.3 1461.8 219.3 1474.0 221.0C1486.2 222.7 1495.2 223.9 1506.0 224.7C1516.8 225.5 1530.5 225.8 1539.0 225.8C1547.5 225.9 1554.0 225.1 1557.0 225.0" stroke-width="7"/>
<path d="M1536.5 212.0C1538.4 212.8 1544.3 214.4 1548.0 216.5C1551.7 218.6 1558.5 222.2 1558.5 224.5C1558.5 226.8 1551.7 228.8 1548.0 230.5C1544.3 232.2 1538.4 234.0 1536.5 234.7" stroke-width="5.5"/>
<path d="M1582.6 224.2C1579.3 226.8 1570.3 234.6 1563.0 239.6C1555.7 244.6 1548.2 248.8 1538.7 254.0C1529.2 259.1 1516.8 265.3 1506.0 270.5C1495.2 275.7 1483.0 281.1 1473.7 285.0C1464.4 288.9 1461.8 289.4 1450.0 294.0C1438.2 298.6 1419.7 306.5 1403.2 312.8C1386.7 319.1 1368.4 325.7 1351.0 331.6C1333.6 337.5 1316.2 343.1 1298.8 348.3C1281.4 353.5 1264.0 358.0 1246.6 362.9C1229.2 367.8 1211.8 372.8 1194.4 377.5C1177.0 382.2 1157.9 386.8 1142.2 391.1C1126.5 395.5 1113.1 399.8 1100.0 403.6C1086.9 407.4 1077.7 410.2 1063.7 414.1C1049.7 418.0 1029.3 423.2 1015.8 427.1C1002.3 431.0 993.5 433.9 982.5 437.7C971.5 441.5 960.8 445.6 950.0 449.9C939.2 454.2 928.3 459.0 917.5 463.7C906.7 468.4 895.8 473.6 885.0 478.3C874.2 483.0 863.3 487.6 852.5 492.1C841.7 496.6 830.9 501.0 820.0 505.1C809.1 509.2 800.2 512.9 787.0 517.0C773.8 521.1 756.4 525.3 741.0 529.8C725.6 534.2 710.1 538.9 694.6 543.7C679.1 548.5 663.7 553.7 648.3 558.7C632.9 563.7 617.4 568.7 602.0 573.8C586.6 578.8 568.0 584.4 555.7 588.8C543.4 593.2 536.5 596.1 528.0 600.4C519.5 604.6 510.8 609.7 504.8 614.3C498.8 618.9 494.5 622.6 492.0 628.0C489.5 633.4 491.0 640.5 489.8 646.7C488.6 652.9 486.3 658.8 485.0 665.0C483.7 671.2 482.5 680.8 482.0 684.0" stroke-width="6.2"/>
<path d="M467.5 666.0C468.6 667.5 471.6 671.7 474.0 675.0C476.4 678.3 479.4 685.8 481.7 686.0C484.0 686.2 485.7 679.5 488.0 676.0C490.3 672.5 494.2 666.8 495.5 665.0" stroke-width="5.5"/>
<circle cx="1559" cy="213.5" r="2" stroke-width="2.5" fill="#ed1c24"/>
</g></svg>
</body>
</html>
